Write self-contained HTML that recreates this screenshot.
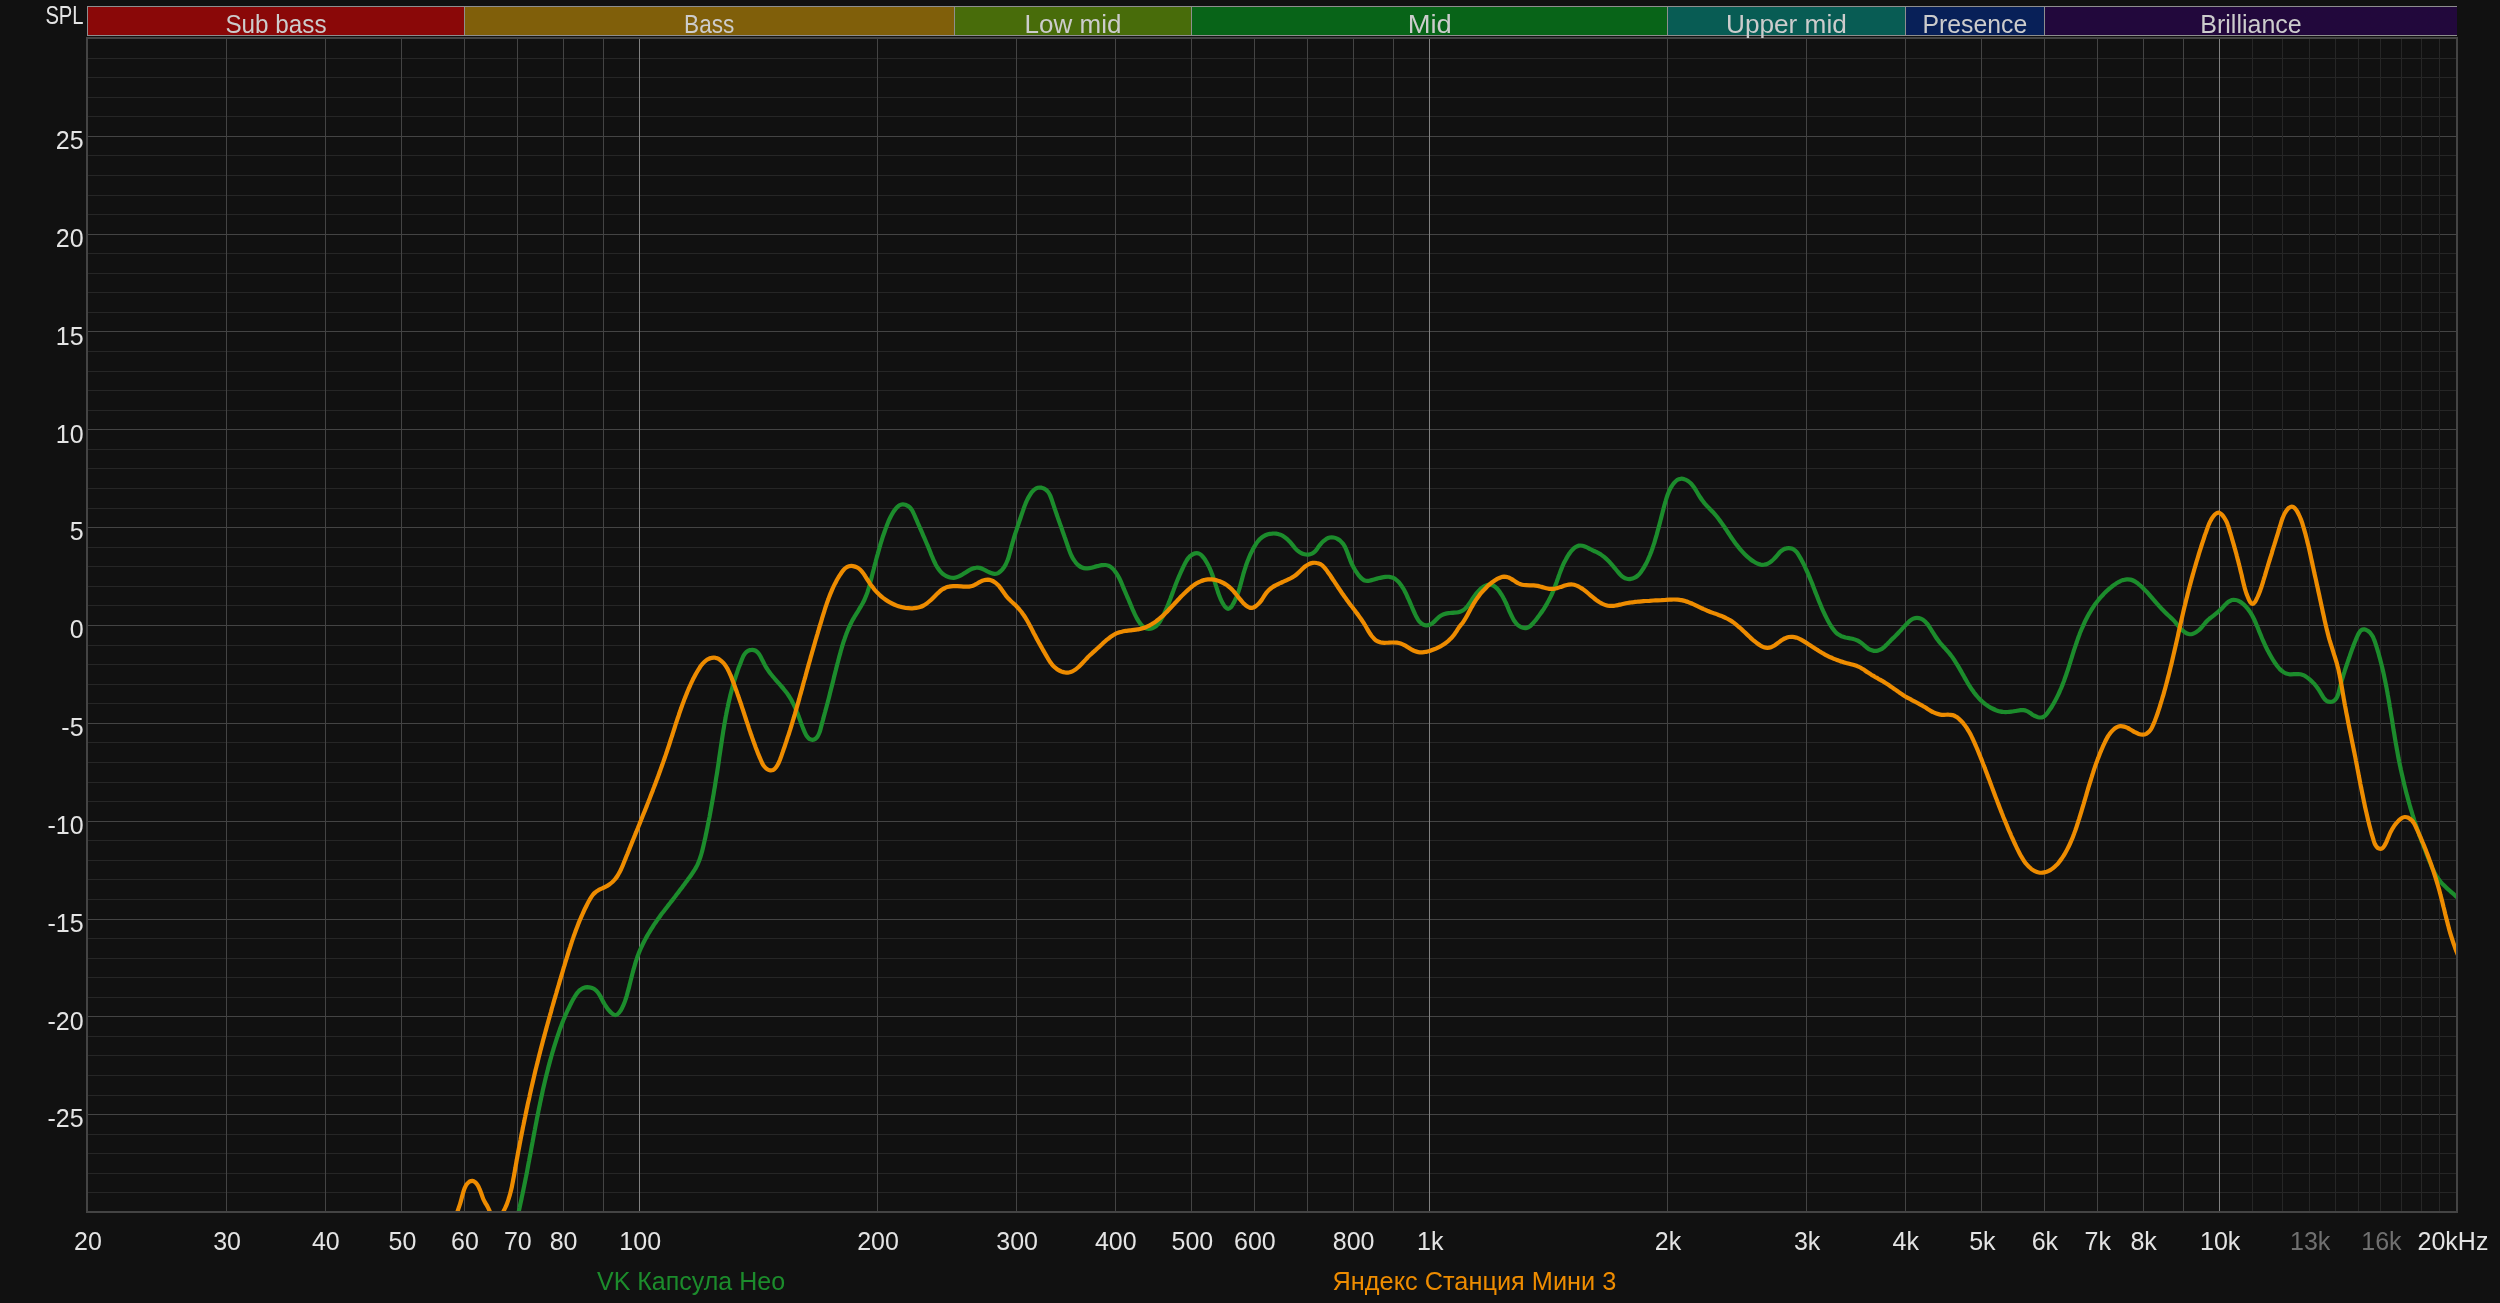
<!DOCTYPE html>
<html lang="ru"><head><meta charset="utf-8"><title>SPL</title>
<style>
html,body{margin:0;padding:0;background:#111111;width:2500px;height:1303px;overflow:hidden}
svg{position:absolute;left:0;top:0;display:block;will-change:transform}
text{font-family:"Liberation Sans",sans-serif;font-size:25px}
.g rect{shape-rendering:crispEdges}
</style></head><body>
<svg width="2500" height="1303" viewBox="0 0 2500 1303">
<rect width="2500" height="1303" fill="#111111"/>
<g class="g">
<rect x="87" y="6" width="2370" height="30" fill="#8e8e8e"/>
<rect x="88" y="7" width="376" height="28" fill="#8a0808"/>
<rect x="465" y="7" width="489" height="28" fill="#805f0a"/>
<rect x="955" y="7" width="236" height="28" fill="#486c0a"/>
<rect x="1192" y="7" width="475" height="28" fill="#086418"/>
<rect x="1668" y="7" width="237" height="28" fill="#085c54"/>
<rect x="1906" y="7" width="138" height="28" fill="#082058"/>
<rect x="2045" y="7" width="412" height="28" fill="#22083c"/>
<rect x="88" y="1192" width="2368" height="1" fill="#262626"/>
<rect x="88" y="1173" width="2368" height="1" fill="#262626"/>
<rect x="88" y="1153" width="2368" height="1" fill="#262626"/>
<rect x="88" y="1134" width="2368" height="1" fill="#262626"/>
<rect x="88" y="1114" width="2368" height="1" fill="#444444"/>
<rect x="88" y="1095" width="2368" height="1" fill="#262626"/>
<rect x="88" y="1075" width="2368" height="1" fill="#262626"/>
<rect x="88" y="1055" width="2368" height="1" fill="#262626"/>
<rect x="88" y="1036" width="2368" height="1" fill="#262626"/>
<rect x="88" y="1016" width="2368" height="1" fill="#444444"/>
<rect x="88" y="997" width="2368" height="1" fill="#262626"/>
<rect x="88" y="977" width="2368" height="1" fill="#262626"/>
<rect x="88" y="958" width="2368" height="1" fill="#262626"/>
<rect x="88" y="938" width="2368" height="1" fill="#262626"/>
<rect x="88" y="919" width="2368" height="1" fill="#444444"/>
<rect x="88" y="899" width="2368" height="1" fill="#262626"/>
<rect x="88" y="879" width="2368" height="1" fill="#262626"/>
<rect x="88" y="860" width="2368" height="1" fill="#262626"/>
<rect x="88" y="840" width="2368" height="1" fill="#262626"/>
<rect x="88" y="821" width="2368" height="1" fill="#444444"/>
<rect x="88" y="801" width="2368" height="1" fill="#262626"/>
<rect x="88" y="782" width="2368" height="1" fill="#262626"/>
<rect x="88" y="762" width="2368" height="1" fill="#262626"/>
<rect x="88" y="742" width="2368" height="1" fill="#262626"/>
<rect x="88" y="723" width="2368" height="1" fill="#444444"/>
<rect x="88" y="703" width="2368" height="1" fill="#262626"/>
<rect x="88" y="684" width="2368" height="1" fill="#262626"/>
<rect x="88" y="664" width="2368" height="1" fill="#262626"/>
<rect x="88" y="645" width="2368" height="1" fill="#262626"/>
<rect x="88" y="625" width="2368" height="1" fill="#444444"/>
<rect x="88" y="605" width="2368" height="1" fill="#262626"/>
<rect x="88" y="586" width="2368" height="1" fill="#262626"/>
<rect x="88" y="566" width="2368" height="1" fill="#262626"/>
<rect x="88" y="547" width="2368" height="1" fill="#262626"/>
<rect x="88" y="527" width="2368" height="1" fill="#444444"/>
<rect x="88" y="508" width="2368" height="1" fill="#262626"/>
<rect x="88" y="488" width="2368" height="1" fill="#262626"/>
<rect x="88" y="468" width="2368" height="1" fill="#262626"/>
<rect x="88" y="449" width="2368" height="1" fill="#262626"/>
<rect x="88" y="429" width="2368" height="1" fill="#444444"/>
<rect x="88" y="410" width="2368" height="1" fill="#262626"/>
<rect x="88" y="390" width="2368" height="1" fill="#262626"/>
<rect x="88" y="371" width="2368" height="1" fill="#262626"/>
<rect x="88" y="351" width="2368" height="1" fill="#262626"/>
<rect x="88" y="331" width="2368" height="1" fill="#444444"/>
<rect x="88" y="312" width="2368" height="1" fill="#262626"/>
<rect x="88" y="292" width="2368" height="1" fill="#262626"/>
<rect x="88" y="273" width="2368" height="1" fill="#262626"/>
<rect x="88" y="253" width="2368" height="1" fill="#262626"/>
<rect x="88" y="234" width="2368" height="1" fill="#444444"/>
<rect x="88" y="214" width="2368" height="1" fill="#262626"/>
<rect x="88" y="195" width="2368" height="1" fill="#262626"/>
<rect x="88" y="175" width="2368" height="1" fill="#262626"/>
<rect x="88" y="155" width="2368" height="1" fill="#262626"/>
<rect x="88" y="136" width="2368" height="1" fill="#444444"/>
<rect x="88" y="116" width="2368" height="1" fill="#262626"/>
<rect x="88" y="97" width="2368" height="1" fill="#262626"/>
<rect x="88" y="77" width="2368" height="1" fill="#262626"/>
<rect x="88" y="58" width="2368" height="1" fill="#262626"/>
<rect x="2252" y="39" width="1" height="1172" fill="#262626"/>
<rect x="2282" y="39" width="1" height="1172" fill="#262626"/>
<rect x="2309" y="39" width="1" height="1172" fill="#262626"/>
<rect x="2335" y="39" width="1" height="1172" fill="#262626"/>
<rect x="2358" y="39" width="1" height="1172" fill="#262626"/>
<rect x="2380" y="39" width="1" height="1172" fill="#262626"/>
<rect x="2401" y="39" width="1" height="1172" fill="#262626"/>
<rect x="2421" y="39" width="1" height="1172" fill="#262626"/>
<rect x="2439" y="39" width="1" height="1172" fill="#262626"/>
<rect x="226" y="39" width="1" height="1172" fill="#444444"/>
<rect x="325" y="39" width="1" height="1172" fill="#444444"/>
<rect x="401" y="39" width="1" height="1172" fill="#444444"/>
<rect x="464" y="39" width="1" height="1172" fill="#444444"/>
<rect x="517" y="39" width="1" height="1172" fill="#444444"/>
<rect x="563" y="39" width="1" height="1172" fill="#444444"/>
<rect x="603" y="39" width="1" height="1172" fill="#444444"/>
<rect x="877" y="39" width="1" height="1172" fill="#444444"/>
<rect x="1016" y="39" width="1" height="1172" fill="#444444"/>
<rect x="1115" y="39" width="1" height="1172" fill="#444444"/>
<rect x="1191" y="39" width="1" height="1172" fill="#444444"/>
<rect x="1254" y="39" width="1" height="1172" fill="#444444"/>
<rect x="1307" y="39" width="1" height="1172" fill="#444444"/>
<rect x="1353" y="39" width="1" height="1172" fill="#444444"/>
<rect x="1393" y="39" width="1" height="1172" fill="#444444"/>
<rect x="1667" y="39" width="1" height="1172" fill="#444444"/>
<rect x="1806" y="39" width="1" height="1172" fill="#444444"/>
<rect x="1905" y="39" width="1" height="1172" fill="#444444"/>
<rect x="1981" y="39" width="1" height="1172" fill="#444444"/>
<rect x="2044" y="39" width="1" height="1172" fill="#444444"/>
<rect x="2097" y="39" width="1" height="1172" fill="#444444"/>
<rect x="2143" y="39" width="1" height="1172" fill="#444444"/>
<rect x="2183" y="39" width="1" height="1172" fill="#444444"/>
<rect x="639" y="39" width="1" height="1172" fill="#808080"/>
<rect x="1429" y="39" width="1" height="1172" fill="#808080"/>
<rect x="2219" y="39" width="1" height="1172" fill="#808080"/>
<rect x="86" y="37" width="2372" height="2" fill="#444444"/>
<rect x="86" y="1211" width="2372" height="2" fill="#444444"/>
<rect x="86" y="37" width="2" height="1176" fill="#444444"/>
<rect x="2456" y="37" width="2" height="1176" fill="#444444"/>
</g>
<clipPath id="cp"><rect x="88" y="39" width="2368" height="1172"/></clipPath>
<g clip-path="url(#cp)" fill="none" stroke-width="4.2" stroke-linejoin="round" stroke-linecap="round">
<path stroke="#1c8c2c" d="M516.7 1219.7C516.9 1219.1 517.3 1217.1 517.6 1215.8C518.0 1214.6 518.3 1213.3 518.6 1212.0C518.9 1210.7 519.2 1209.4 519.5 1208.1C519.7 1206.8 520.0 1205.5 520.3 1204.2C520.6 1202.9 520.9 1201.6 521.2 1200.3C521.5 1199.0 521.7 1197.7 522.0 1196.4C522.3 1195.1 522.6 1193.8 522.8 1192.5C523.1 1191.2 523.4 1189.9 523.6 1188.6C523.9 1187.3 524.2 1186.0 524.4 1184.7C524.7 1183.4 525.0 1182.1 525.2 1180.8C525.5 1179.5 525.7 1178.2 526.0 1176.9C526.2 1175.6 526.5 1174.3 526.8 1173.0C527.0 1171.6 527.3 1170.3 527.5 1169.0C527.8 1167.7 528.0 1166.4 528.2 1165.1C528.5 1163.8 528.7 1162.5 529.0 1161.1C529.2 1159.8 529.5 1158.5 529.7 1157.2C530.0 1155.9 530.2 1154.6 530.5 1153.3C530.7 1151.9 531.0 1150.6 531.2 1149.3C531.4 1148.0 531.7 1146.7 531.9 1145.4C532.2 1144.1 532.4 1142.7 532.7 1141.4C532.9 1140.1 533.2 1138.8 533.4 1137.5C533.6 1136.2 533.9 1134.9 534.1 1133.5C534.4 1132.2 534.6 1130.9 534.9 1129.6C535.1 1128.3 535.4 1127.0 535.6 1125.7C535.9 1124.3 536.1 1123.0 536.4 1121.7C536.6 1120.4 536.9 1119.1 537.1 1117.8C537.4 1116.5 537.7 1115.2 537.9 1113.9C538.2 1112.5 538.4 1111.2 538.7 1109.9C539.0 1108.6 539.2 1107.3 539.5 1106.0C539.8 1104.7 540.0 1103.4 540.3 1102.1C540.6 1100.8 540.9 1099.5 541.1 1098.2C541.4 1096.9 541.7 1095.6 542.0 1094.2C542.3 1092.9 542.6 1091.6 542.8 1090.3C543.1 1089.0 543.4 1087.7 543.7 1086.5C544.0 1085.2 544.3 1083.9 544.6 1082.6C544.9 1081.3 545.2 1080.0 545.5 1078.7C545.8 1077.4 546.2 1076.1 546.5 1074.8C546.8 1073.5 547.1 1072.2 547.5 1070.9C547.8 1069.6 548.1 1068.4 548.4 1067.1C548.8 1065.8 549.1 1064.5 549.5 1063.2C549.8 1061.9 550.1 1060.7 550.5 1059.4C550.9 1058.1 551.2 1056.8 551.6 1055.5C551.9 1054.3 552.3 1053.0 552.7 1051.7C553.1 1050.5 553.4 1049.2 553.8 1047.9C554.2 1046.7 554.6 1045.4 555.0 1044.1C555.4 1042.9 555.8 1041.6 556.2 1040.3C556.6 1039.1 557.0 1037.8 557.4 1036.6C557.8 1035.3 558.3 1034.1 558.7 1032.8C559.1 1031.5 559.6 1030.3 560.0 1029.0C560.5 1027.8 560.9 1026.6 561.4 1025.3C561.9 1024.1 562.3 1022.8 562.8 1021.6C563.3 1020.3 563.8 1019.1 564.4 1017.9C564.9 1016.6 565.4 1015.4 565.9 1014.1C566.5 1012.9 567.0 1011.7 567.6 1010.4C568.2 1009.2 568.8 1007.9 569.4 1006.7C570.0 1005.5 570.6 1004.2 571.2 1003.0C571.9 1001.8 572.5 1000.5 573.2 999.3C573.9 998.1 574.6 996.8 575.4 995.7C576.1 994.5 576.9 993.4 577.7 992.4C578.6 991.4 579.4 990.5 580.4 989.8C581.4 989.0 582.4 988.4 583.5 987.9C584.7 987.5 585.9 987.3 587.2 987.2C588.5 987.2 590.0 987.4 591.3 987.8C592.6 988.2 593.9 988.9 595.0 989.6C596.1 990.4 597.0 991.4 597.9 992.5C598.7 993.5 599.4 994.7 600.1 995.9C600.8 997.1 601.4 998.3 602.0 999.5C602.6 1000.7 603.2 1001.9 603.9 1003.0C604.6 1004.2 605.3 1005.3 606.0 1006.4C606.8 1007.6 607.6 1008.7 608.5 1009.8C609.4 1010.9 610.4 1012.2 611.5 1013.0C612.5 1013.9 613.7 1014.8 614.7 1015.0C615.7 1015.2 616.8 1014.8 617.7 1014.1C618.7 1013.4 619.6 1012.1 620.4 1010.9C621.2 1009.8 621.9 1008.4 622.5 1007.1C623.2 1005.8 623.7 1004.6 624.2 1003.3C624.7 1002.1 625.1 1000.8 625.5 999.6C626.0 998.3 626.3 997.1 626.7 995.8C627.0 994.6 627.4 993.3 627.7 992.0C628.1 990.7 628.4 989.5 628.8 988.2C629.1 986.9 629.4 985.6 629.7 984.3C630.1 983.0 630.4 981.7 630.7 980.4C631.0 979.1 631.4 977.8 631.7 976.5C632.0 975.2 632.4 973.9 632.7 972.6C633.1 971.3 633.4 970.0 633.8 968.7C634.1 967.4 634.5 966.1 634.9 964.8C635.3 963.5 635.6 962.3 636.0 961.0C636.5 959.7 636.9 958.4 637.3 957.2C637.8 955.9 638.2 954.7 638.7 953.4C639.2 952.2 639.7 951.0 640.2 949.7C640.7 948.5 641.3 947.3 641.9 946.1C642.4 944.9 643.0 943.7 643.6 942.5C644.2 941.3 644.8 940.1 645.4 939.0C646.0 937.8 646.7 936.6 647.4 935.5C648.0 934.3 648.7 933.2 649.4 932.1C650.1 930.9 650.8 929.8 651.5 928.7C652.2 927.5 652.9 926.4 653.6 925.3C654.4 924.2 655.1 923.1 655.9 922.0C656.6 920.9 657.4 919.8 658.2 918.7C659.0 917.6 659.8 916.6 660.5 915.5C661.3 914.4 662.1 913.3 662.9 912.3C663.7 911.2 664.6 910.2 665.4 909.1C666.2 908.0 667.0 907.0 667.8 905.9C668.6 904.9 669.5 903.8 670.3 902.8C671.1 901.7 671.9 900.7 672.8 899.6C673.6 898.6 674.4 897.5 675.2 896.5C676.0 895.4 676.8 894.3 677.6 893.3C678.4 892.2 679.2 891.2 680.0 890.1C680.8 889.0 681.6 888.0 682.4 886.9C683.2 885.8 684.0 884.8 684.8 883.7C685.6 882.6 686.4 881.6 687.2 880.5C688.0 879.4 688.8 878.3 689.6 877.2C690.4 876.2 691.1 875.1 691.9 874.0C692.7 872.9 693.4 871.8 694.1 870.7C694.8 869.5 695.5 868.4 696.1 867.2C696.8 866.1 697.4 864.9 697.9 863.7C698.4 862.5 698.9 861.3 699.4 860.0C699.9 858.8 700.3 857.5 700.7 856.2C701.1 855.0 701.5 853.7 701.8 852.4C702.2 851.1 702.5 849.8 702.8 848.5C703.1 847.2 703.4 845.9 703.7 844.6C704.0 843.3 704.3 842.0 704.6 840.6C704.9 839.3 705.2 838.0 705.5 836.7C705.7 835.4 706.0 834.1 706.3 832.8C706.6 831.5 706.8 830.2 707.1 828.9C707.4 827.6 707.6 826.2 707.9 824.9C708.2 823.6 708.4 822.3 708.7 821.0C708.9 819.7 709.2 818.4 709.5 817.1C709.7 815.8 709.9 814.5 710.2 813.2C710.4 811.9 710.7 810.6 710.9 809.2C711.2 807.9 711.4 806.6 711.6 805.3C711.9 804.0 712.1 802.7 712.3 801.4C712.6 800.1 712.8 798.8 713.0 797.5C713.2 796.2 713.5 794.9 713.7 793.5C713.9 792.2 714.1 790.9 714.3 789.6C714.6 788.3 714.8 787.0 715.0 785.7C715.2 784.4 715.4 783.1 715.6 781.8C715.8 780.4 716.0 779.1 716.2 777.8C716.4 776.5 716.7 775.2 716.9 773.9C717.1 772.6 717.3 771.2 717.5 769.9C717.7 768.6 717.9 767.3 718.1 766.0C718.3 764.6 718.5 763.3 718.7 762.0C718.9 760.7 719.1 759.4 719.2 758.0C719.4 756.7 719.6 755.4 719.8 754.1C720.0 752.7 720.2 751.4 720.4 750.1C720.6 748.8 720.8 747.4 721.0 746.1C721.2 744.8 721.4 743.4 721.6 742.1C721.8 740.8 722.0 739.5 722.2 738.1C722.4 736.8 722.6 735.5 722.8 734.2C723.0 732.8 723.2 731.5 723.4 730.2C723.7 728.9 723.9 727.6 724.1 726.2C724.3 724.9 724.5 723.6 724.8 722.3C725.0 721.0 725.2 719.7 725.5 718.3C725.7 717.0 725.9 715.7 726.2 714.4C726.4 713.1 726.7 711.8 727.0 710.5C727.2 709.2 727.5 707.9 727.8 706.6C728.0 705.3 728.3 704.0 728.6 702.7C728.9 701.4 729.2 700.1 729.5 698.9C729.8 697.6 730.1 696.3 730.4 695.0C730.7 693.7 731.1 692.5 731.4 691.2C731.7 689.9 732.1 688.6 732.4 687.4C732.8 686.1 733.2 684.8 733.5 683.5C733.9 682.3 734.3 681.0 734.7 679.7C735.1 678.4 735.5 677.2 735.9 675.9C736.3 674.6 736.8 673.4 737.2 672.1C737.6 670.8 738.1 669.5 738.5 668.2C739.0 666.9 739.5 665.7 740.0 664.4C740.5 663.1 741.0 661.8 741.5 660.5C742.0 659.2 742.5 657.8 743.1 656.6C743.7 655.5 744.4 654.3 745.2 653.3C746.0 652.3 746.9 651.5 748.0 650.9C749.1 650.3 750.4 649.9 751.6 649.9C752.8 649.8 754.1 650.0 755.2 650.5C756.2 651.0 757.2 651.8 758.1 652.8C759.0 653.8 759.7 655.1 760.4 656.3C761.1 657.6 761.8 659.0 762.4 660.3C763.1 661.6 763.7 662.8 764.3 664.0C765.0 665.2 765.6 666.4 766.3 667.5C767.0 668.6 767.7 669.6 768.4 670.7C769.1 671.7 769.8 672.7 770.6 673.8C771.4 674.8 772.2 675.8 773.1 676.8C773.9 677.8 774.8 678.8 775.7 679.8C776.6 680.9 777.5 681.9 778.4 682.9C779.3 683.9 780.2 684.9 781.1 686.0C782.0 687.0 782.9 688.0 783.7 689.1C784.6 690.1 785.5 691.2 786.3 692.3C787.1 693.3 787.8 694.4 788.6 695.5C789.3 696.6 790.0 697.7 790.7 698.8C791.3 699.9 791.9 701.0 792.5 702.2C793.1 703.3 793.7 704.5 794.2 705.7C794.8 706.8 795.3 708.0 795.8 709.2C796.3 710.4 796.8 711.6 797.3 712.9C797.8 714.1 798.3 715.4 798.7 716.6C799.2 717.9 799.7 719.2 800.2 720.5C800.6 721.8 801.1 723.1 801.6 724.4C802.1 725.8 802.6 727.1 803.2 728.5C803.7 729.9 804.3 731.3 804.9 732.6C805.5 733.9 806.1 735.2 806.9 736.3C807.6 737.3 808.4 738.3 809.3 738.9C810.2 739.4 811.4 739.8 812.4 739.8C813.4 739.7 814.6 739.4 815.5 738.8C816.4 738.2 817.1 737.2 817.8 736.1C818.5 735.1 819.0 733.8 819.5 732.4C820.0 731.1 820.4 729.6 820.8 728.2C821.1 726.7 821.5 725.3 821.9 723.9C822.2 722.5 822.6 721.1 823.0 719.8C823.3 718.5 823.7 717.1 824.0 715.9C824.4 714.6 824.7 713.3 825.1 712.0C825.4 710.8 825.8 709.5 826.1 708.3C826.4 707.1 826.8 705.8 827.1 704.6C827.4 703.3 827.8 702.1 828.1 700.8C828.4 699.6 828.8 698.3 829.1 697.0C829.4 695.8 829.7 694.5 830.0 693.2C830.4 691.9 830.7 690.6 831.0 689.3C831.3 688.0 831.7 686.8 832.0 685.5C832.3 684.2 832.6 682.9 833.0 681.6C833.3 680.3 833.6 679.0 833.9 677.6C834.2 676.3 834.6 675.0 834.9 673.7C835.2 672.4 835.5 671.1 835.9 669.8C836.2 668.5 836.5 667.2 836.9 665.9C837.2 664.6 837.5 663.3 837.9 662.0C838.2 660.7 838.6 659.4 838.9 658.1C839.2 656.8 839.6 655.5 840.0 654.2C840.3 652.9 840.7 651.6 841.0 650.3C841.4 649.1 841.8 647.8 842.1 646.5C842.5 645.2 842.9 644.0 843.3 642.7C843.7 641.4 844.1 640.2 844.6 638.9C845.0 637.7 845.4 636.4 845.9 635.2C846.3 633.9 846.8 632.7 847.3 631.5C847.8 630.2 848.3 629.0 848.9 627.8C849.4 626.6 849.9 625.4 850.5 624.2C851.1 623.0 851.7 621.8 852.3 620.6C852.9 619.5 853.6 618.3 854.3 617.1C854.9 616.0 855.6 614.8 856.4 613.7C857.1 612.5 857.8 611.4 858.5 610.3C859.2 609.1 860.0 608.0 860.6 606.8C861.3 605.7 862.0 604.5 862.7 603.3C863.3 602.2 863.9 601.0 864.5 599.8C865.0 598.6 865.5 597.4 866.0 596.1C866.5 594.9 866.9 593.7 867.4 592.4C867.8 591.2 868.2 589.9 868.6 588.6C869.0 587.4 869.3 586.1 869.7 584.8C870.0 583.5 870.4 582.2 870.7 580.9C871.0 579.7 871.3 578.4 871.7 577.1C872.0 575.8 872.3 574.5 872.7 573.2C873.0 571.9 873.3 570.6 873.7 569.3C874.0 568.0 874.3 566.7 874.7 565.4C875.0 564.1 875.3 562.8 875.7 561.5C876.0 560.2 876.4 558.9 876.7 557.6C877.1 556.3 877.4 555.0 877.8 553.8C878.1 552.5 878.5 551.2 878.9 549.9C879.2 548.6 879.6 547.3 880.0 546.0C880.3 544.8 880.7 543.5 881.1 542.2C881.5 540.9 881.9 539.7 882.3 538.4C882.7 537.1 883.1 535.9 883.6 534.6C884.0 533.4 884.4 532.1 884.9 530.9C885.3 529.6 885.7 528.4 886.2 527.2C886.7 525.9 887.1 524.7 887.6 523.5C888.1 522.3 888.6 521.0 889.2 519.8C889.7 518.6 890.3 517.4 890.9 516.2C891.6 515.0 892.2 513.8 893.0 512.6C893.7 511.5 894.5 510.2 895.4 509.1C896.2 508.1 897.2 506.9 898.2 506.2C899.2 505.4 900.4 504.8 901.6 504.5C902.8 504.3 904.2 504.4 905.4 504.7C906.6 505.1 907.8 505.7 908.8 506.5C909.8 507.2 910.6 508.3 911.4 509.3C912.2 510.4 912.8 511.6 913.4 512.9C914.0 514.1 914.6 515.5 915.1 516.7C915.7 518.0 916.2 519.3 916.8 520.5C917.3 521.8 917.8 523.0 918.4 524.3C918.9 525.5 919.4 526.7 920.0 527.9C920.5 529.1 921.0 530.3 921.6 531.5C922.1 532.8 922.6 533.9 923.1 535.1C923.6 536.3 924.2 537.5 924.7 538.7C925.2 539.9 925.7 541.1 926.2 542.3C926.7 543.5 927.3 544.7 927.8 545.9C928.3 547.2 928.8 548.4 929.3 549.6C929.8 550.9 930.3 552.1 930.8 553.4C931.3 554.7 931.8 555.9 932.4 557.2C932.9 558.5 933.4 559.8 934.0 561.0C934.6 562.3 935.2 563.5 935.8 564.7C936.5 565.9 937.1 567.1 937.9 568.2C938.6 569.3 939.4 570.3 940.3 571.3C941.1 572.2 942.0 573.2 943.0 574.0C944.1 574.8 945.1 575.5 946.3 576.1C947.5 576.7 948.8 577.3 950.0 577.5C951.3 577.8 952.6 578.0 953.9 577.9C955.1 577.8 956.4 577.4 957.6 576.9C958.9 576.4 960.1 575.8 961.3 575.1C962.5 574.4 963.7 573.6 964.9 572.9C966.1 572.1 967.3 571.3 968.5 570.6C969.7 569.9 970.9 569.3 972.1 568.8C973.3 568.3 974.5 567.9 975.8 567.8C977.0 567.6 978.3 567.7 979.6 567.9C980.8 568.2 982.1 568.7 983.4 569.3C984.7 569.9 986.0 570.6 987.3 571.3C988.5 571.9 989.8 572.6 991.0 573.0C992.3 573.5 993.5 573.9 994.7 573.9C995.9 573.9 997.0 573.6 998.1 573.1C999.2 572.5 1000.2 571.7 1001.1 570.8C1002.1 569.9 1003.0 568.8 1003.7 567.7C1004.5 566.6 1005.2 565.4 1005.8 564.2C1006.4 563.1 1006.9 561.8 1007.4 560.6C1007.9 559.3 1008.3 558.1 1008.7 556.8C1009.1 555.5 1009.5 554.2 1009.8 552.9C1010.2 551.6 1010.5 550.3 1010.8 549.0C1011.2 547.7 1011.5 546.3 1011.9 545.0C1012.3 543.7 1012.6 542.4 1013.0 541.2C1013.4 539.9 1013.8 538.6 1014.1 537.3C1014.5 536.0 1014.9 534.8 1015.3 533.5C1015.7 532.2 1016.1 530.9 1016.6 529.7C1017.0 528.4 1017.4 527.1 1017.8 525.9C1018.2 524.6 1018.7 523.4 1019.1 522.1C1019.5 520.9 1019.9 519.6 1020.4 518.4C1020.8 517.1 1021.2 515.8 1021.6 514.6C1022.1 513.4 1022.5 512.1 1022.9 510.9C1023.3 509.6 1023.8 508.4 1024.2 507.1C1024.7 505.9 1025.1 504.7 1025.6 503.4C1026.1 502.2 1026.7 501.0 1027.2 499.8C1027.8 498.5 1028.5 497.3 1029.2 496.1C1029.9 495.0 1030.7 493.7 1031.5 492.6C1032.4 491.6 1033.3 490.4 1034.3 489.6C1035.4 488.8 1036.5 488.1 1037.7 487.8C1038.9 487.5 1040.3 487.5 1041.6 487.7C1042.8 488.0 1044.2 488.5 1045.2 489.2C1046.3 489.9 1047.2 490.8 1048.0 491.8C1048.7 492.7 1049.4 493.9 1050.0 495.1C1050.5 496.3 1051.0 497.6 1051.5 498.9C1051.9 500.2 1052.4 501.5 1052.8 502.9C1053.2 504.2 1053.7 505.5 1054.1 506.8C1054.5 508.1 1055.0 509.3 1055.4 510.6C1055.8 511.9 1056.3 513.2 1056.7 514.5C1057.1 515.7 1057.6 517.0 1058.0 518.2C1058.5 519.5 1058.9 520.7 1059.3 522.0C1059.8 523.2 1060.2 524.5 1060.7 525.7C1061.1 527.0 1061.5 528.2 1062.0 529.4C1062.4 530.7 1062.8 531.9 1063.3 533.2C1063.7 534.4 1064.2 535.6 1064.6 536.9C1065.0 538.1 1065.5 539.4 1065.9 540.6C1066.3 541.9 1066.8 543.1 1067.2 544.4C1067.6 545.7 1068.1 547.0 1068.5 548.2C1069.0 549.5 1069.4 550.8 1069.9 552.0C1070.4 553.3 1070.9 554.5 1071.5 555.7C1072.1 556.9 1072.7 558.1 1073.4 559.3C1074.2 560.4 1074.9 561.5 1075.8 562.6C1076.7 563.6 1077.7 564.7 1078.7 565.5C1079.7 566.3 1080.9 567.1 1082.0 567.5C1083.2 568.0 1084.4 568.3 1085.7 568.4C1086.9 568.5 1088.2 568.3 1089.5 568.1C1090.8 567.9 1092.2 567.6 1093.5 567.2C1094.9 566.9 1096.3 566.5 1097.6 566.1C1099.0 565.8 1100.3 565.4 1101.7 565.2C1103.0 565.1 1104.3 564.9 1105.5 565.0C1106.8 565.2 1108.0 565.5 1109.2 566.0C1110.3 566.6 1111.3 567.4 1112.3 568.3C1113.3 569.2 1114.3 570.3 1115.1 571.4C1115.9 572.5 1116.7 573.6 1117.4 574.8C1118.1 575.9 1118.7 577.1 1119.3 578.3C1119.9 579.5 1120.5 580.7 1121.0 581.9C1121.5 583.1 1122.0 584.3 1122.5 585.5C1123.0 586.7 1123.5 588.0 1124.0 589.2C1124.6 590.4 1125.1 591.7 1125.6 592.9C1126.1 594.1 1126.7 595.4 1127.2 596.6C1127.7 597.8 1128.3 599.1 1128.8 600.3C1129.3 601.5 1129.8 602.8 1130.4 604.0C1130.9 605.2 1131.4 606.5 1131.9 607.7C1132.4 608.9 1132.9 610.1 1133.5 611.3C1134.0 612.5 1134.5 613.7 1135.1 614.9C1135.7 616.1 1136.3 617.3 1136.9 618.4C1137.6 619.6 1138.3 620.8 1139.1 621.9C1139.8 623.1 1140.7 624.3 1141.6 625.2C1142.5 626.2 1143.5 627.1 1144.7 627.8C1145.8 628.4 1147.1 628.7 1148.4 628.8C1149.6 628.9 1151.1 628.7 1152.3 628.3C1153.6 627.9 1154.7 627.2 1155.8 626.4C1156.8 625.6 1157.6 624.6 1158.5 623.5C1159.3 622.5 1160.0 621.3 1160.7 620.1C1161.4 619.0 1162.0 617.8 1162.7 616.6C1163.3 615.4 1163.9 614.2 1164.5 612.9C1165.0 611.7 1165.6 610.5 1166.1 609.3C1166.7 608.1 1167.2 606.8 1167.7 605.6C1168.2 604.4 1168.7 603.1 1169.2 601.9C1169.7 600.6 1170.1 599.4 1170.6 598.2C1171.1 596.9 1171.5 595.7 1172.0 594.4C1172.5 593.2 1172.9 591.9 1173.4 590.7C1173.8 589.4 1174.3 588.2 1174.8 587.0C1175.2 585.7 1175.7 584.5 1176.2 583.2C1176.7 582.0 1177.2 580.8 1177.7 579.5C1178.2 578.3 1178.7 577.1 1179.2 575.9C1179.8 574.6 1180.3 573.4 1180.8 572.2C1181.4 571.0 1182.0 569.8 1182.5 568.6C1183.1 567.3 1183.7 566.1 1184.3 564.9C1184.9 563.7 1185.5 562.5 1186.2 561.3C1186.8 560.2 1187.5 559.0 1188.4 558.0C1189.2 557.0 1190.2 556.0 1191.3 555.3C1192.4 554.5 1193.8 553.7 1195.0 553.4C1196.3 553.1 1197.7 553.1 1198.8 553.5C1199.9 553.8 1200.9 554.7 1201.8 555.6C1202.8 556.5 1203.6 557.7 1204.4 558.8C1205.2 559.9 1205.9 561.1 1206.6 562.2C1207.3 563.4 1207.9 564.6 1208.5 565.8C1209.1 566.9 1209.7 568.2 1210.2 569.4C1210.8 570.6 1211.2 571.8 1211.7 573.1C1212.2 574.3 1212.6 575.6 1213.1 576.8C1213.5 578.1 1213.9 579.4 1214.3 580.6C1214.8 581.9 1215.1 583.2 1215.5 584.5C1216.0 585.7 1216.4 587.0 1216.8 588.3C1217.2 589.5 1217.6 590.8 1218.0 592.0C1218.4 593.3 1218.9 594.6 1219.3 595.8C1219.8 597.0 1220.3 598.2 1220.8 599.5C1221.4 600.7 1222.0 602.0 1222.7 603.2C1223.5 604.4 1224.3 606.0 1225.3 606.9C1226.2 607.8 1227.3 608.7 1228.2 608.8C1229.1 608.8 1230.1 608.1 1230.9 607.3C1231.7 606.5 1232.4 605.1 1233.1 604.0C1233.8 602.8 1234.4 601.5 1235.0 600.3C1235.6 599.1 1236.1 597.9 1236.7 596.6C1237.2 595.4 1237.6 594.1 1238.0 592.8C1238.5 591.6 1238.9 590.3 1239.3 589.0C1239.7 587.7 1240.0 586.4 1240.4 585.1C1240.8 583.9 1241.1 582.6 1241.4 581.3C1241.8 580.0 1242.1 578.7 1242.5 577.4C1242.8 576.1 1243.2 574.8 1243.5 573.5C1243.9 572.2 1244.3 571.0 1244.7 569.7C1245.1 568.4 1245.5 567.2 1245.9 565.9C1246.3 564.7 1246.8 563.4 1247.2 562.2C1247.7 560.9 1248.2 559.7 1248.7 558.4C1249.2 557.2 1249.7 556.0 1250.2 554.8C1250.8 553.6 1251.4 552.3 1252.0 551.1C1252.6 549.9 1253.2 548.7 1253.8 547.6C1254.5 546.4 1255.2 545.2 1255.9 544.1C1256.6 543.0 1257.4 541.9 1258.3 540.9C1259.1 539.9 1260.0 538.9 1261.0 538.1C1262.0 537.2 1263.1 536.5 1264.2 535.9C1265.4 535.2 1266.7 534.7 1268.0 534.3C1269.3 533.9 1270.7 533.7 1272.0 533.6C1273.3 533.4 1274.7 533.5 1276.0 533.6C1277.3 533.8 1278.6 534.1 1279.8 534.6C1281.0 535.0 1282.2 535.6 1283.3 536.2C1284.5 536.9 1285.5 537.7 1286.6 538.6C1287.6 539.5 1288.5 540.4 1289.5 541.4C1290.4 542.4 1291.3 543.5 1292.2 544.6C1293.0 545.7 1293.9 546.8 1294.8 547.8C1295.7 548.8 1296.6 549.8 1297.6 550.7C1298.6 551.5 1299.6 552.3 1300.8 552.9C1301.9 553.5 1303.2 554.0 1304.5 554.3C1305.7 554.6 1307.1 554.7 1308.3 554.6C1309.6 554.5 1310.8 554.2 1311.9 553.7C1313.0 553.2 1314.0 552.4 1314.9 551.5C1315.8 550.6 1316.6 549.5 1317.4 548.4C1318.2 547.2 1319.1 546.0 1320.0 544.8C1320.9 543.7 1321.9 542.5 1323.0 541.5C1324.0 540.5 1325.2 539.6 1326.3 538.9C1327.5 538.3 1328.7 537.8 1329.8 537.5C1331.0 537.3 1332.3 537.3 1333.5 537.5C1334.7 537.7 1335.9 538.1 1337.0 538.6C1338.1 539.2 1339.2 539.9 1340.2 540.7C1341.2 541.6 1342.1 542.6 1342.9 543.6C1343.7 544.7 1344.4 545.9 1345.1 547.1C1345.7 548.3 1346.3 549.6 1346.8 550.9C1347.3 552.2 1347.8 553.6 1348.3 554.9C1348.7 556.2 1349.2 557.5 1349.7 558.7C1350.1 560.0 1350.6 561.2 1351.1 562.4C1351.6 563.6 1352.2 564.7 1352.8 565.9C1353.3 567.0 1353.9 568.1 1354.6 569.2C1355.3 570.4 1356.0 571.5 1356.8 572.6C1357.6 573.8 1358.4 575.0 1359.3 576.1C1360.3 577.1 1361.2 578.3 1362.3 579.0C1363.3 579.8 1364.4 580.5 1365.6 580.8C1366.7 581.0 1367.9 580.9 1369.2 580.8C1370.4 580.6 1371.7 580.2 1373.0 579.8C1374.4 579.5 1375.7 579.0 1377.1 578.6C1378.5 578.3 1379.9 577.9 1381.2 577.6C1382.6 577.3 1384.0 577.0 1385.3 576.9C1386.7 576.8 1388.0 576.7 1389.2 576.8C1390.5 577.0 1391.7 577.3 1392.8 577.7C1393.9 578.2 1395.0 578.8 1396.0 579.6C1397.0 580.3 1397.9 581.2 1398.8 582.2C1399.7 583.2 1400.5 584.3 1401.3 585.4C1402.1 586.5 1402.9 587.8 1403.6 589.0C1404.3 590.2 1404.9 591.5 1405.6 592.8C1406.2 594.0 1406.8 595.3 1407.3 596.5C1407.9 597.8 1408.4 599.0 1409.0 600.1C1409.5 601.3 1410.0 602.5 1410.5 603.6C1411.0 604.8 1411.4 605.9 1412.0 607.1C1412.5 608.2 1413.0 609.4 1413.5 610.6C1414.0 611.8 1414.6 613.1 1415.2 614.4C1415.8 615.6 1416.4 617.0 1417.2 618.2C1417.9 619.4 1418.6 620.7 1419.5 621.7C1420.4 622.7 1421.4 623.6 1422.5 624.2C1423.5 624.8 1424.8 625.2 1426.0 625.3C1427.2 625.4 1428.5 625.3 1429.7 624.8C1430.9 624.4 1432.0 623.5 1433.0 622.7C1434.1 621.8 1435.1 620.7 1436.1 619.7C1437.1 618.7 1438.1 617.6 1439.1 616.8C1440.1 616.0 1441.2 615.3 1442.3 614.8C1443.4 614.2 1444.6 613.9 1445.9 613.6C1447.1 613.3 1448.5 613.2 1449.9 613.0C1451.3 612.9 1452.8 612.9 1454.2 612.7C1455.7 612.6 1457.1 612.5 1458.4 612.2C1459.7 611.9 1460.9 611.4 1462.0 610.9C1463.1 610.3 1464.0 609.6 1465.0 608.8C1465.9 608.0 1466.7 607.0 1467.5 606.1C1468.3 605.1 1469.1 604.0 1469.8 602.9C1470.6 601.8 1471.3 600.7 1472.1 599.5C1472.9 598.4 1473.6 597.2 1474.5 596.0C1475.3 594.9 1476.2 593.7 1477.1 592.6C1478.1 591.5 1479.1 590.4 1480.1 589.4C1481.2 588.4 1482.3 587.5 1483.4 586.8C1484.5 586.1 1485.7 585.5 1486.8 585.1C1487.9 584.8 1489.1 584.6 1490.1 584.7C1491.2 584.8 1492.3 585.2 1493.3 585.7C1494.4 586.3 1495.4 587.1 1496.3 587.9C1497.3 588.8 1498.2 589.9 1499.1 591.0C1499.9 592.2 1500.8 593.4 1501.5 594.7C1502.3 595.9 1503.1 597.3 1503.7 598.5C1504.4 599.8 1505.0 601.1 1505.6 602.3C1506.2 603.5 1506.7 604.7 1507.2 605.9C1507.7 607.0 1508.1 608.1 1508.6 609.3C1509.1 610.4 1509.6 611.5 1510.1 612.7C1510.6 613.8 1511.2 615.0 1511.8 616.2C1512.4 617.4 1513.0 618.7 1513.7 619.9C1514.5 621.0 1515.3 622.3 1516.2 623.3C1517.1 624.4 1518.1 625.4 1519.2 626.1C1520.4 626.9 1521.7 627.5 1522.9 627.8C1524.2 628.1 1525.5 628.1 1526.7 627.9C1527.9 627.6 1529.0 627.0 1530.0 626.3C1531.0 625.5 1531.9 624.5 1532.8 623.5C1533.7 622.5 1534.6 621.4 1535.5 620.4C1536.3 619.3 1537.2 618.2 1538.0 617.1C1538.8 616.0 1539.6 614.9 1540.4 613.8C1541.2 612.7 1542.0 611.6 1542.7 610.5C1543.5 609.4 1544.2 608.2 1544.9 607.1C1545.6 606.0 1546.3 604.8 1547.0 603.6C1547.6 602.5 1548.3 601.3 1548.9 600.1C1549.5 599.0 1550.1 597.8 1550.7 596.6C1551.3 595.4 1551.8 594.2 1552.4 593.0C1552.9 591.8 1553.4 590.6 1553.9 589.4C1554.4 588.1 1554.9 586.9 1555.3 585.7C1555.8 584.4 1556.2 583.2 1556.7 581.9C1557.1 580.7 1557.5 579.4 1558.0 578.2C1558.4 577.0 1558.8 575.7 1559.3 574.5C1559.8 573.2 1560.2 572.0 1560.7 570.7C1561.2 569.5 1561.7 568.2 1562.2 567.0C1562.7 565.8 1563.3 564.5 1563.8 563.3C1564.4 562.1 1565.0 560.9 1565.7 559.7C1566.3 558.5 1567.0 557.3 1567.7 556.1C1568.5 554.9 1569.2 553.7 1570.1 552.6C1570.9 551.5 1571.8 550.4 1572.7 549.5C1573.6 548.5 1574.6 547.7 1575.7 547.0C1576.7 546.4 1577.8 545.9 1578.9 545.6C1580.1 545.4 1581.3 545.5 1582.5 545.7C1583.8 546.0 1585.1 546.6 1586.4 547.2C1587.7 547.8 1589.0 548.6 1590.3 549.2C1591.6 549.8 1592.8 550.4 1594.1 551.0C1595.3 551.6 1596.5 552.1 1597.6 552.7C1598.8 553.3 1599.9 553.9 1601.0 554.6C1602.0 555.3 1603.1 556.1 1604.1 556.9C1605.1 557.7 1606.0 558.6 1607.0 559.5C1607.9 560.4 1608.8 561.3 1609.8 562.3C1610.7 563.3 1611.6 564.3 1612.4 565.3C1613.3 566.4 1614.2 567.4 1615.1 568.5C1615.9 569.5 1616.8 570.6 1617.7 571.6C1618.6 572.7 1619.5 573.8 1620.4 574.7C1621.4 575.7 1622.3 576.6 1623.4 577.3C1624.4 578.0 1625.6 578.6 1626.8 578.8C1628.1 579.1 1629.5 579.1 1630.8 578.9C1632.2 578.8 1633.5 578.3 1634.7 577.7C1635.9 577.1 1636.9 576.3 1637.9 575.5C1638.9 574.6 1639.8 573.5 1640.6 572.5C1641.4 571.4 1642.2 570.2 1642.9 569.1C1643.6 568.0 1644.3 566.8 1645.0 565.6C1645.6 564.4 1646.3 563.3 1646.9 562.1C1647.5 560.9 1648.0 559.7 1648.5 558.5C1649.1 557.2 1649.6 556.0 1650.1 554.8C1650.6 553.5 1651.0 552.3 1651.5 551.1C1652.0 549.8 1652.4 548.6 1652.8 547.3C1653.2 546.0 1653.7 544.8 1654.1 543.5C1654.5 542.2 1654.9 541.0 1655.2 539.7C1655.6 538.4 1656.0 537.1 1656.4 535.9C1656.7 534.6 1657.1 533.3 1657.4 532.0C1657.8 530.7 1658.1 529.4 1658.5 528.1C1658.8 526.8 1659.2 525.5 1659.5 524.2C1659.8 523.0 1660.2 521.7 1660.5 520.4C1660.8 519.1 1661.2 517.8 1661.5 516.5C1661.8 515.2 1662.2 513.9 1662.5 512.6C1662.8 511.3 1663.2 510.0 1663.5 508.7C1663.9 507.4 1664.2 506.2 1664.5 504.9C1664.9 503.6 1665.2 502.3 1665.6 501.1C1666.0 499.8 1666.4 498.5 1666.8 497.2C1667.2 496.0 1667.6 494.7 1668.1 493.5C1668.6 492.3 1669.1 491.0 1669.7 489.8C1670.3 488.6 1670.9 487.4 1671.7 486.3C1672.4 485.1 1673.2 483.9 1674.1 482.9C1675.0 481.8 1676.0 480.8 1677.0 480.1C1678.1 479.4 1679.3 478.9 1680.5 478.8C1681.8 478.6 1683.2 478.8 1684.4 479.2C1685.6 479.5 1686.9 480.2 1688.0 480.9C1689.1 481.6 1690.1 482.6 1691.0 483.5C1692.0 484.5 1692.8 485.6 1693.6 486.7C1694.4 487.8 1695.1 489.0 1695.8 490.1C1696.6 491.3 1697.2 492.4 1697.9 493.6C1698.6 494.7 1699.3 495.9 1700.0 497.0C1700.7 498.1 1701.4 499.2 1702.2 500.3C1703.0 501.4 1703.8 502.4 1704.6 503.4C1705.5 504.4 1706.4 505.4 1707.3 506.4C1708.2 507.4 1709.2 508.3 1710.1 509.2C1711.1 510.2 1712.0 511.2 1712.9 512.1C1713.9 513.1 1714.7 514.1 1715.6 515.1C1716.5 516.1 1717.3 517.2 1718.1 518.2C1719.0 519.3 1719.7 520.4 1720.5 521.4C1721.3 522.5 1722.1 523.6 1722.8 524.7C1723.6 525.8 1724.4 526.9 1725.1 528.0C1725.8 529.1 1726.6 530.2 1727.3 531.3C1728.0 532.4 1728.8 533.6 1729.5 534.7C1730.3 535.8 1731.0 536.9 1731.7 538.0C1732.5 539.1 1733.2 540.2 1734.0 541.3C1734.8 542.4 1735.6 543.4 1736.4 544.5C1737.2 545.6 1738.0 546.6 1738.8 547.6C1739.6 548.7 1740.5 549.7 1741.4 550.7C1742.3 551.7 1743.2 552.7 1744.1 553.6C1745.0 554.6 1746.0 555.5 1747.0 556.4C1748.0 557.3 1749.0 558.2 1750.1 559.0C1751.2 559.9 1752.3 560.7 1753.5 561.4C1754.6 562.2 1755.8 562.9 1757.0 563.4C1758.1 563.9 1759.4 564.3 1760.6 564.6C1761.8 564.8 1763.0 564.9 1764.2 564.7C1765.4 564.6 1766.6 564.2 1767.8 563.6C1769.0 563.1 1770.2 562.2 1771.3 561.3C1772.4 560.4 1773.5 559.4 1774.5 558.3C1775.6 557.3 1776.5 556.1 1777.4 555.1C1778.3 554.1 1779.1 553.0 1780.0 552.1C1780.9 551.2 1781.8 550.4 1782.9 549.8C1784.0 549.1 1785.3 548.6 1786.5 548.4C1787.8 548.1 1789.3 548.1 1790.6 548.3C1791.9 548.5 1793.1 549.0 1794.1 549.7C1795.2 550.4 1796.0 551.4 1796.9 552.4C1797.7 553.4 1798.4 554.7 1799.1 555.8C1799.8 557.0 1800.5 558.2 1801.2 559.4C1801.8 560.6 1802.5 561.8 1803.1 563.0C1803.7 564.2 1804.3 565.4 1804.9 566.7C1805.4 567.9 1806.0 569.1 1806.5 570.3C1807.1 571.5 1807.6 572.7 1808.2 574.0C1808.7 575.2 1809.2 576.4 1809.7 577.6C1810.2 578.8 1810.7 580.1 1811.2 581.3C1811.7 582.5 1812.2 583.8 1812.7 585.0C1813.1 586.2 1813.6 587.5 1814.1 588.7C1814.6 589.9 1815.0 591.2 1815.5 592.4C1816.0 593.6 1816.5 594.9 1817.0 596.1C1817.5 597.4 1817.9 598.6 1818.4 599.8C1818.9 601.1 1819.4 602.3 1820.0 603.5C1820.5 604.8 1821.0 606.0 1821.5 607.2C1822.0 608.5 1822.6 609.7 1823.1 610.9C1823.7 612.1 1824.2 613.3 1824.8 614.5C1825.4 615.7 1826.0 616.9 1826.6 618.1C1827.2 619.3 1827.9 620.5 1828.5 621.7C1829.2 622.9 1829.8 624.0 1830.5 625.2C1831.2 626.3 1831.9 627.5 1832.7 628.6C1833.5 629.7 1834.3 630.7 1835.2 631.7C1836.1 632.6 1837.0 633.5 1838.1 634.3C1839.2 635.0 1840.3 635.7 1841.5 636.2C1842.8 636.7 1844.1 637.1 1845.4 637.5C1846.7 637.8 1848.1 638.0 1849.4 638.2C1850.7 638.5 1852.1 638.6 1853.3 639.0C1854.6 639.3 1855.8 639.7 1857.0 640.3C1858.2 640.8 1859.3 641.5 1860.4 642.3C1861.5 643.0 1862.6 643.9 1863.6 644.8C1864.7 645.7 1865.7 646.7 1866.7 647.5C1867.8 648.3 1868.9 649.2 1870.0 649.7C1871.2 650.3 1872.5 650.7 1873.8 650.9C1875.1 651.0 1876.5 650.9 1877.8 650.6C1879.0 650.4 1880.2 649.8 1881.4 649.2C1882.5 648.5 1883.5 647.6 1884.5 646.8C1885.5 645.9 1886.5 644.8 1887.4 643.9C1888.4 642.9 1889.3 641.9 1890.3 640.9C1891.2 640.0 1892.2 639.1 1893.2 638.1C1894.1 637.2 1895.1 636.3 1896.0 635.3C1896.9 634.4 1897.8 633.5 1898.7 632.5C1899.6 631.6 1900.5 630.6 1901.4 629.7C1902.3 628.7 1903.2 627.7 1904.1 626.7C1905.0 625.7 1905.9 624.7 1906.9 623.7C1907.9 622.7 1908.9 621.7 1909.9 620.8C1911.0 620.0 1912.1 619.1 1913.3 618.6C1914.5 618.1 1915.7 617.8 1917.0 617.8C1918.2 617.8 1919.6 618.1 1920.8 618.6C1921.9 619.1 1923.1 619.8 1924.1 620.6C1925.2 621.4 1926.1 622.5 1926.9 623.5C1927.8 624.5 1928.6 625.7 1929.4 626.8C1930.2 628.0 1930.9 629.1 1931.6 630.3C1932.3 631.4 1933.0 632.6 1933.7 633.7C1934.4 634.8 1935.1 635.9 1935.8 637.0C1936.5 638.1 1937.3 639.2 1938.1 640.3C1938.8 641.3 1939.7 642.4 1940.5 643.4C1941.4 644.4 1942.3 645.4 1943.2 646.4C1944.1 647.4 1945.0 648.3 1945.9 649.3C1946.8 650.3 1947.7 651.3 1948.6 652.3C1949.4 653.4 1950.3 654.4 1951.1 655.5C1951.9 656.5 1952.7 657.6 1953.4 658.7C1954.2 659.8 1954.9 660.9 1955.6 662.1C1956.3 663.2 1957.0 664.3 1957.7 665.5C1958.4 666.6 1959.1 667.8 1959.7 668.9C1960.4 670.1 1961.0 671.2 1961.7 672.4C1962.3 673.6 1963.0 674.7 1963.7 675.9C1964.3 677.1 1965.0 678.2 1965.6 679.4C1966.3 680.5 1967.0 681.7 1967.6 682.8C1968.3 683.9 1969.0 685.1 1969.7 686.2C1970.4 687.3 1971.2 688.4 1971.9 689.5C1972.7 690.6 1973.4 691.6 1974.2 692.7C1975.0 693.7 1975.8 694.8 1976.7 695.8C1977.5 696.8 1978.4 697.8 1979.3 698.7C1980.3 699.7 1981.2 700.6 1982.2 701.5C1983.2 702.4 1984.3 703.2 1985.3 704.1C1986.4 704.9 1987.6 705.7 1988.7 706.4C1989.9 707.2 1991.1 707.9 1992.3 708.5C1993.5 709.1 1994.8 709.7 1996.0 710.2C1997.3 710.6 1998.5 711.1 1999.8 711.4C2001.1 711.7 2002.4 711.9 2003.7 712.0C2005.0 712.1 2006.3 712.1 2007.5 712.0C2008.8 712.0 2010.1 711.8 2011.4 711.6C2012.7 711.5 2014.0 711.2 2015.4 711.0C2016.7 710.8 2018.1 710.4 2019.4 710.3C2020.7 710.2 2022.1 710.0 2023.3 710.1C2024.6 710.2 2025.8 710.6 2027.0 711.1C2028.1 711.6 2029.1 712.4 2030.3 713.1C2031.5 713.9 2032.6 714.8 2033.9 715.5C2035.1 716.1 2036.6 716.8 2038.0 717.2C2039.3 717.5 2040.7 717.6 2041.9 717.4C2043.1 717.1 2044.1 716.4 2045.1 715.6C2046.0 714.8 2046.8 713.7 2047.7 712.6C2048.5 711.6 2049.2 710.4 2050.0 709.3C2050.8 708.2 2051.5 707.1 2052.2 705.9C2052.9 704.8 2053.6 703.6 2054.2 702.5C2054.9 701.3 2055.5 700.1 2056.1 698.9C2056.7 697.8 2057.3 696.6 2057.9 695.4C2058.5 694.2 2059.0 693.0 2059.6 691.8C2060.1 690.5 2060.6 689.3 2061.2 688.1C2061.7 686.9 2062.2 685.6 2062.7 684.4C2063.1 683.2 2063.6 681.9 2064.1 680.7C2064.5 679.4 2065.0 678.2 2065.4 676.9C2065.9 675.7 2066.3 674.4 2066.7 673.1C2067.1 671.9 2067.6 670.6 2068.0 669.3C2068.4 668.1 2068.8 666.8 2069.2 665.5C2069.6 664.2 2070.0 663.0 2070.4 661.7C2070.8 660.4 2071.2 659.1 2071.6 657.9C2072.0 656.6 2072.4 655.3 2072.8 654.0C2073.2 652.7 2073.6 651.5 2074.0 650.2C2074.4 648.9 2074.9 647.6 2075.3 646.4C2075.7 645.1 2076.1 643.8 2076.6 642.6C2077.0 641.3 2077.4 640.0 2077.9 638.8C2078.3 637.5 2078.8 636.3 2079.3 635.0C2079.7 633.8 2080.2 632.5 2080.7 631.3C2081.2 630.1 2081.7 628.8 2082.3 627.6C2082.8 626.4 2083.3 625.2 2083.9 624.0C2084.4 622.7 2085.0 621.5 2085.6 620.3C2086.2 619.1 2086.8 618.0 2087.4 616.8C2088.0 615.6 2088.7 614.5 2089.3 613.3C2090.0 612.2 2090.7 611.0 2091.3 609.9C2092.0 608.8 2092.8 607.7 2093.5 606.6C2094.2 605.5 2095.0 604.4 2095.8 603.3C2096.6 602.3 2097.4 601.2 2098.2 600.2C2099.0 599.1 2099.9 598.1 2100.8 597.1C2101.7 596.1 2102.6 595.1 2103.5 594.2C2104.4 593.2 2105.4 592.3 2106.4 591.3C2107.4 590.4 2108.4 589.5 2109.4 588.6C2110.5 587.7 2111.5 586.9 2112.6 586.0C2113.7 585.2 2114.9 584.4 2116.0 583.6C2117.2 582.9 2118.3 582.2 2119.5 581.6C2120.7 581.0 2121.9 580.5 2123.1 580.1C2124.4 579.8 2125.6 579.5 2126.8 579.4C2128.0 579.3 2129.3 579.4 2130.5 579.6C2131.7 579.9 2132.9 580.4 2134.1 581.0C2135.3 581.6 2136.5 582.5 2137.7 583.3C2138.8 584.2 2139.9 585.1 2140.9 586.1C2142.0 587.0 2142.9 587.9 2143.9 588.9C2144.8 589.8 2145.7 590.7 2146.6 591.7C2147.5 592.7 2148.3 593.6 2149.2 594.6C2150.0 595.6 2150.9 596.6 2151.8 597.6C2152.6 598.6 2153.5 599.6 2154.4 600.6C2155.2 601.6 2156.1 602.6 2157.0 603.6C2157.9 604.6 2158.8 605.7 2159.7 606.6C2160.6 607.6 2161.5 608.6 2162.4 609.6C2163.4 610.6 2164.3 611.5 2165.3 612.5C2166.2 613.4 2167.2 614.3 2168.2 615.2C2169.2 616.1 2170.2 617.0 2171.1 617.9C2172.1 618.8 2173.0 619.7 2173.9 620.7C2174.8 621.7 2175.6 622.7 2176.5 623.7C2177.3 624.7 2178.1 625.8 2179.0 626.8C2179.9 627.8 2180.8 628.8 2181.8 629.8C2182.8 630.7 2183.9 631.6 2185.0 632.4C2186.2 633.1 2187.4 633.7 2188.6 634.0C2189.8 634.3 2191.1 634.3 2192.3 634.0C2193.6 633.7 2194.8 633.0 2196.0 632.3C2197.2 631.6 2198.3 630.7 2199.3 629.8C2200.3 628.8 2201.1 627.8 2202.0 626.8C2202.8 625.8 2203.6 624.8 2204.5 623.8C2205.3 622.8 2206.2 621.8 2207.2 620.8C2208.1 619.9 2209.2 619.0 2210.2 618.1C2211.3 617.2 2212.4 616.4 2213.5 615.6C2214.5 614.8 2215.6 614.0 2216.6 613.2C2217.5 612.4 2218.4 611.7 2219.3 610.8C2220.3 609.9 2221.2 609.0 2222.2 608.0C2223.1 607.0 2224.1 605.8 2225.2 604.8C2226.2 603.7 2227.4 602.6 2228.5 601.8C2229.6 601.0 2230.8 600.4 2231.9 600.0C2233.1 599.7 2234.3 599.8 2235.5 600.0C2236.7 600.2 2237.9 600.6 2239.0 601.2C2240.2 601.8 2241.3 602.5 2242.4 603.4C2243.4 604.2 2244.4 605.1 2245.3 606.0C2246.3 607.0 2247.1 608.0 2247.9 609.0C2248.8 610.0 2249.5 611.1 2250.2 612.2C2251.0 613.3 2251.6 614.5 2252.3 615.7C2252.9 616.9 2253.5 618.1 2254.1 619.3C2254.7 620.5 2255.2 621.8 2255.8 623.0C2256.3 624.3 2256.8 625.5 2257.4 626.8C2257.9 628.1 2258.4 629.3 2258.9 630.6C2259.4 631.8 2259.9 633.1 2260.4 634.3C2260.9 635.6 2261.4 636.8 2261.9 638.0C2262.4 639.2 2263.0 640.4 2263.5 641.6C2264.0 642.9 2264.6 644.0 2265.1 645.2C2265.7 646.4 2266.3 647.6 2266.8 648.8C2267.4 650.0 2268.0 651.1 2268.7 652.3C2269.3 653.5 2269.9 654.6 2270.6 655.8C2271.2 656.9 2271.9 658.1 2272.6 659.2C2273.3 660.4 2274.1 661.5 2274.8 662.7C2275.6 663.8 2276.4 664.9 2277.2 666.0C2278.1 667.1 2278.9 668.1 2279.8 669.1C2280.8 670.0 2281.7 670.9 2282.8 671.6C2283.8 672.3 2284.9 673.0 2286.1 673.4C2287.3 673.9 2288.5 674.2 2289.8 674.3C2291.1 674.4 2292.6 674.3 2294.0 674.2C2295.4 674.2 2296.9 674.0 2298.3 674.0C2299.6 674.1 2301.0 674.3 2302.2 674.7C2303.5 675.1 2304.7 675.7 2305.8 676.4C2306.9 677.1 2308.0 678.0 2309.0 678.8C2310.0 679.6 2311.0 680.5 2311.9 681.4C2312.8 682.3 2313.7 683.2 2314.6 684.2C2315.4 685.2 2316.2 686.2 2317.0 687.2C2317.8 688.3 2318.5 689.4 2319.3 690.6C2320.0 691.8 2320.7 693.1 2321.5 694.3C2322.2 695.6 2322.9 696.9 2323.8 698.0C2324.6 699.1 2325.5 700.1 2326.5 700.8C2327.6 701.4 2328.8 701.8 2330.0 701.9C2331.2 702.0 2332.5 701.7 2333.5 701.1C2334.6 700.6 2335.4 699.7 2336.2 698.6C2336.9 697.6 2337.4 696.3 2337.9 695.0C2338.4 693.7 2338.7 692.2 2339.1 690.8C2339.5 689.4 2339.8 687.9 2340.1 686.6C2340.4 685.3 2340.8 684.0 2341.1 682.8C2341.5 681.5 2341.9 680.3 2342.2 679.0C2342.6 677.8 2343.0 676.6 2343.3 675.4C2343.7 674.1 2344.1 672.8 2344.5 671.6C2344.9 670.3 2345.4 669.0 2345.8 667.7C2346.2 666.4 2346.6 665.1 2347.1 663.9C2347.5 662.6 2347.9 661.3 2348.4 660.0C2348.8 658.7 2349.2 657.5 2349.7 656.2C2350.1 654.9 2350.6 653.7 2351.0 652.4C2351.5 651.2 2351.9 650.0 2352.3 648.7C2352.8 647.5 2353.2 646.3 2353.7 645.1C2354.1 643.9 2354.6 642.7 2355.1 641.5C2355.6 640.2 2356.1 639.0 2356.7 637.6C2357.3 636.3 2357.9 634.8 2358.6 633.6C2359.4 632.4 2360.1 630.9 2361.1 630.2C2362.1 629.5 2363.3 629.2 2364.4 629.3C2365.5 629.4 2366.8 630.2 2367.8 630.8C2368.8 631.5 2369.7 632.3 2370.5 633.2C2371.3 634.2 2372.0 635.2 2372.6 636.3C2373.2 637.4 2373.7 638.7 2374.2 639.9C2374.7 641.1 2375.2 642.5 2375.6 643.8C2376.0 645.1 2376.4 646.4 2376.8 647.7C2377.2 649.0 2377.6 650.3 2378.0 651.6C2378.4 653.0 2378.8 654.3 2379.1 655.6C2379.5 656.9 2379.9 658.2 2380.2 659.5C2380.5 660.8 2380.9 662.1 2381.2 663.4C2381.5 664.8 2381.9 666.1 2382.2 667.4C2382.5 668.7 2382.8 670.0 2383.1 671.3C2383.4 672.6 2383.7 673.9 2384.0 675.2C2384.2 676.5 2384.5 677.8 2384.8 679.2C2385.1 680.5 2385.3 681.8 2385.6 683.1C2385.9 684.4 2386.1 685.7 2386.4 687.0C2386.6 688.3 2386.9 689.6 2387.1 690.9C2387.4 692.2 2387.6 693.6 2387.8 694.9C2388.1 696.2 2388.3 697.5 2388.5 698.8C2388.7 700.1 2389.0 701.4 2389.2 702.7C2389.4 704.0 2389.6 705.3 2389.8 706.6C2390.1 707.9 2390.3 709.3 2390.5 710.6C2390.7 711.9 2390.9 713.2 2391.1 714.5C2391.3 715.8 2391.5 717.1 2391.8 718.4C2392.0 719.7 2392.2 721.0 2392.4 722.3C2392.6 723.6 2392.8 724.9 2393.0 726.2C2393.2 727.6 2393.4 728.9 2393.6 730.2C2393.9 731.5 2394.1 732.8 2394.3 734.1C2394.5 735.4 2394.7 736.7 2394.9 738.0C2395.1 739.3 2395.4 740.6 2395.6 742.0C2395.8 743.3 2396.0 744.6 2396.3 745.9C2396.5 747.2 2396.7 748.5 2397.0 749.8C2397.2 751.1 2397.5 752.4 2397.7 753.7C2397.9 755.0 2398.2 756.3 2398.4 757.7C2398.7 759.0 2399.0 760.3 2399.2 761.6C2399.5 762.9 2399.7 764.2 2400.0 765.5C2400.3 766.8 2400.6 768.1 2400.8 769.4C2401.1 770.7 2401.4 772.0 2401.7 773.4C2402.0 774.7 2402.3 776.0 2402.6 777.3C2402.9 778.6 2403.2 779.9 2403.5 781.2C2403.8 782.5 2404.1 783.8 2404.4 785.1C2404.7 786.4 2405.0 787.7 2405.4 789.0C2405.7 790.3 2406.0 791.6 2406.3 792.9C2406.7 794.2 2407.0 795.4 2407.4 796.7C2407.7 798.0 2408.1 799.3 2408.4 800.6C2408.8 801.9 2409.1 803.2 2409.5 804.5C2409.9 805.8 2410.2 807.0 2410.6 808.3C2411.0 809.6 2411.4 810.9 2411.8 812.1C2412.1 813.4 2412.5 814.7 2412.9 816.0C2413.3 817.2 2413.7 818.5 2414.1 819.8C2414.5 821.0 2415.0 822.3 2415.4 823.6C2415.8 824.8 2416.2 826.1 2416.7 827.4C2417.1 828.6 2417.5 829.9 2418.0 831.1C2418.4 832.4 2418.9 833.6 2419.3 834.9C2419.8 836.1 2420.2 837.3 2420.7 838.6C2421.2 839.8 2421.6 841.1 2422.1 842.3C2422.6 843.5 2423.1 844.8 2423.5 846.0C2424.0 847.3 2424.5 848.5 2425.0 849.7C2425.5 851.0 2426.0 852.2 2426.4 853.4C2426.9 854.7 2427.4 855.9 2427.9 857.2C2428.4 858.4 2428.9 859.6 2429.4 860.9C2429.9 862.1 2430.4 863.3 2430.9 864.6C2431.4 865.8 2431.9 867.0 2432.4 868.3C2433.0 869.5 2433.5 870.7 2434.1 871.9C2434.7 873.0 2435.3 874.2 2436.0 875.3C2436.7 876.5 2437.4 877.6 2438.2 878.6C2438.9 879.7 2439.7 880.8 2440.6 881.8C2441.5 882.8 2442.4 883.8 2443.3 884.7C2444.2 885.7 2445.2 886.6 2446.2 887.5C2447.2 888.5 2448.2 889.4 2449.2 890.3C2450.2 891.2 2451.2 892.0 2452.2 892.9C2453.3 893.8 2454.3 894.7 2455.2 895.6C2456.2 896.5 2457.4 897.6 2458.1 898.3C2458.8 899.0 2459.4 899.5 2459.6 899.8"/>
<path stroke="#ee8c00" d="M455.3 1219.2C455.5 1218.5 456.0 1216.2 456.4 1214.9C456.8 1213.6 457.2 1212.4 457.6 1211.1C458.0 1209.9 458.4 1208.8 458.8 1207.6C459.2 1206.4 459.6 1205.3 460.0 1204.1C460.4 1202.9 460.8 1201.7 461.1 1200.3C461.5 1199.0 461.8 1197.6 462.2 1196.2C462.6 1194.8 463.0 1193.3 463.4 1191.9C463.8 1190.5 464.3 1189.1 464.8 1187.8C465.4 1186.5 466.0 1185.3 466.7 1184.3C467.5 1183.3 468.3 1182.3 469.3 1181.7C470.2 1181.2 471.4 1180.7 472.4 1180.8C473.4 1180.9 474.5 1181.7 475.4 1182.4C476.3 1183.2 477.1 1184.3 477.8 1185.4C478.5 1186.5 479.1 1187.9 479.6 1189.2C480.2 1190.5 480.7 1191.9 481.2 1193.3C481.7 1194.7 482.2 1196.1 482.7 1197.4C483.2 1198.7 483.7 1199.9 484.3 1201.0C484.9 1202.1 485.5 1203.1 486.1 1204.2C486.7 1205.2 487.3 1206.2 487.9 1207.4C488.5 1208.6 489.1 1210.0 489.7 1211.3C490.3 1212.6 490.9 1214.0 491.8 1215.2C492.6 1216.5 493.6 1217.8 494.6 1218.5C495.5 1219.2 496.6 1219.6 497.6 1219.4C498.5 1219.1 499.3 1218.1 500.1 1217.1C500.9 1216.1 501.6 1214.8 502.2 1213.7C502.9 1212.5 503.6 1211.3 504.1 1210.1C504.7 1208.9 505.3 1207.7 505.8 1206.5C506.4 1205.3 506.9 1204.0 507.3 1202.8C507.8 1201.5 508.2 1200.3 508.6 1199.0C509.0 1197.8 509.4 1196.5 509.8 1195.2C510.1 1193.9 510.5 1192.6 510.8 1191.3C511.1 1190.1 511.4 1188.8 511.7 1187.5C512.0 1186.2 512.2 1184.8 512.5 1183.5C512.8 1182.2 513.0 1180.9 513.2 1179.6C513.5 1178.3 513.7 1177.0 514.0 1175.7C514.2 1174.3 514.4 1173.0 514.7 1171.7C514.9 1170.4 515.1 1169.0 515.4 1167.7C515.6 1166.4 515.8 1165.1 516.1 1163.8C516.3 1162.5 516.5 1161.1 516.8 1159.8C517.0 1158.5 517.3 1157.2 517.5 1155.9C517.7 1154.6 518.0 1153.3 518.2 1151.9C518.5 1150.6 518.7 1149.3 519.0 1148.0C519.2 1146.7 519.5 1145.4 519.7 1144.1C520.0 1142.7 520.2 1141.4 520.5 1140.1C520.7 1138.8 521.0 1137.5 521.2 1136.2C521.5 1134.9 521.7 1133.6 522.0 1132.3C522.3 1131.0 522.5 1129.7 522.8 1128.3C523.0 1127.0 523.3 1125.7 523.6 1124.4C523.8 1123.1 524.1 1121.8 524.4 1120.5C524.6 1119.2 524.9 1117.9 525.2 1116.6C525.4 1115.3 525.7 1114.0 526.0 1112.7C526.3 1111.4 526.5 1110.1 526.8 1108.8C527.1 1107.5 527.4 1106.2 527.6 1104.9C527.9 1103.6 528.2 1102.3 528.5 1101.0C528.8 1099.7 529.1 1098.4 529.4 1097.1C529.6 1095.8 529.9 1094.5 530.2 1093.2C530.5 1091.9 530.8 1090.6 531.1 1089.3C531.4 1088.0 531.7 1086.7 532.0 1085.4C532.3 1084.1 532.6 1082.8 532.9 1081.5C533.2 1080.2 533.5 1078.9 533.8 1077.6C534.1 1076.3 534.4 1075.0 534.7 1073.7C535.0 1072.4 535.3 1071.1 535.6 1069.8C536.0 1068.5 536.3 1067.2 536.6 1065.9C536.9 1064.6 537.2 1063.4 537.6 1062.1C537.9 1060.8 538.2 1059.5 538.5 1058.2C538.8 1056.9 539.2 1055.6 539.5 1054.3C539.8 1053.0 540.2 1051.7 540.5 1050.4C540.8 1049.1 541.2 1047.8 541.5 1046.6C541.8 1045.3 542.2 1044.0 542.5 1042.7C542.9 1041.4 543.2 1040.1 543.5 1038.8C543.9 1037.5 544.2 1036.2 544.6 1035.0C544.9 1033.7 545.3 1032.4 545.6 1031.1C546.0 1029.8 546.3 1028.5 546.7 1027.2C547.0 1025.9 547.4 1024.7 547.7 1023.4C548.1 1022.1 548.4 1020.8 548.8 1019.5C549.2 1018.2 549.5 1016.9 549.9 1015.6C550.2 1014.4 550.6 1013.1 551.0 1011.8C551.3 1010.5 551.7 1009.2 552.0 1007.9C552.4 1006.7 552.8 1005.4 553.1 1004.1C553.5 1002.8 553.9 1001.5 554.2 1000.2C554.6 999.0 555.0 997.7 555.4 996.4C555.7 995.1 556.1 993.8 556.5 992.5C556.8 991.3 557.2 990.0 557.6 988.7C558.0 987.4 558.3 986.1 558.7 984.9C559.1 983.6 559.5 982.3 559.8 981.0C560.2 979.7 560.6 978.5 561.0 977.2C561.3 975.9 561.7 974.6 562.1 973.3C562.5 972.1 562.9 970.8 563.2 969.5C563.6 968.2 564.0 966.9 564.4 965.7C564.8 964.4 565.1 963.1 565.5 961.8C565.9 960.6 566.3 959.3 566.7 958.0C567.1 956.7 567.5 955.5 567.9 954.2C568.2 952.9 568.6 951.6 569.0 950.4C569.5 949.1 569.9 947.8 570.3 946.6C570.7 945.3 571.1 944.0 571.5 942.8C571.9 941.5 572.4 940.3 572.8 939.0C573.2 937.7 573.7 936.5 574.1 935.2C574.6 934.0 575.0 932.7 575.5 931.5C575.9 930.2 576.4 929.0 576.9 927.7C577.4 926.5 577.8 925.3 578.3 924.0C578.8 922.8 579.3 921.5 579.8 920.3C580.4 919.1 580.9 917.9 581.4 916.6C581.9 915.4 582.5 914.2 583.0 913.0C583.6 911.8 584.1 910.5 584.7 909.3C585.3 908.1 585.9 906.9 586.5 905.7C587.1 904.5 587.7 903.3 588.3 902.1C588.9 900.9 589.6 899.7 590.3 898.6C591.0 897.5 591.7 896.3 592.5 895.3C593.3 894.3 594.2 893.3 595.2 892.5C596.1 891.6 597.2 890.9 598.4 890.2C599.5 889.6 600.8 889.0 602.1 888.4C603.3 887.8 604.6 887.3 605.8 886.6C607.0 886.0 608.2 885.3 609.3 884.5C610.4 883.7 611.4 882.9 612.4 882.0C613.3 881.1 614.2 880.1 615.1 879.1C615.9 878.1 616.7 877.1 617.4 876.0C618.1 874.9 618.8 873.7 619.4 872.6C620.0 871.4 620.6 870.2 621.2 869.0C621.7 867.8 622.2 866.6 622.8 865.4C623.3 864.1 623.8 862.9 624.3 861.6C624.8 860.4 625.3 859.1 625.8 857.9C626.3 856.7 626.8 855.4 627.3 854.2C627.8 852.9 628.3 851.7 628.8 850.5C629.3 849.2 629.8 848.0 630.3 846.7C630.8 845.5 631.3 844.2 631.8 843.0C632.3 841.8 632.8 840.5 633.3 839.3C633.8 838.1 634.3 836.8 634.8 835.6C635.3 834.3 635.8 833.1 636.3 831.9C636.8 830.6 637.3 829.4 637.8 828.2C638.3 826.9 638.8 825.7 639.3 824.5C639.8 823.2 640.3 822.0 640.8 820.7C641.3 819.5 641.8 818.3 642.3 817.0C642.8 815.8 643.3 814.6 643.8 813.3C644.3 812.1 644.8 810.8 645.3 809.6C645.8 808.4 646.3 807.1 646.8 805.9C647.2 804.7 647.7 803.4 648.2 802.2C648.7 800.9 649.2 799.7 649.7 798.5C650.2 797.2 650.6 796.0 651.1 794.7C651.6 793.5 652.1 792.3 652.6 791.0C653.0 789.8 653.5 788.5 654.0 787.3C654.5 786.0 654.9 784.8 655.4 783.6C655.9 782.3 656.3 781.1 656.8 779.8C657.3 778.6 657.7 777.3 658.2 776.1C658.7 774.8 659.1 773.6 659.6 772.3C660.0 771.1 660.5 769.8 660.9 768.6C661.4 767.3 661.8 766.1 662.3 764.8C662.7 763.6 663.2 762.3 663.6 761.0C664.1 759.8 664.5 758.5 664.9 757.3C665.4 756.0 665.8 754.8 666.2 753.5C666.7 752.2 667.1 751.0 667.5 749.7C667.9 748.4 668.4 747.2 668.8 745.9C669.2 744.6 669.6 743.4 670.0 742.1C670.4 740.8 670.8 739.6 671.2 738.3C671.7 737.0 672.1 735.7 672.5 734.5C672.9 733.2 673.3 731.9 673.7 730.6C674.1 729.4 674.5 728.1 674.9 726.8C675.3 725.6 675.7 724.3 676.1 723.0C676.6 721.7 677.0 720.5 677.4 719.2C677.8 717.9 678.2 716.7 678.7 715.4C679.1 714.1 679.5 712.9 680.0 711.6C680.4 710.4 680.8 709.1 681.3 707.8C681.7 706.6 682.2 705.3 682.6 704.1C683.1 702.8 683.6 701.6 684.0 700.3C684.5 699.1 685.0 697.8 685.5 696.6C686.0 695.4 686.5 694.1 687.0 692.9C687.5 691.7 688.0 690.4 688.5 689.2C689.0 688.0 689.6 686.8 690.1 685.6C690.7 684.3 691.2 683.1 691.8 681.9C692.4 680.7 692.9 679.5 693.5 678.3C694.2 677.2 694.8 676.0 695.4 674.8C696.0 673.6 696.7 672.5 697.4 671.3C698.1 670.1 698.7 669.0 699.5 667.9C700.2 666.7 700.9 665.6 701.8 664.6C702.6 663.6 703.5 662.6 704.5 661.7C705.5 660.8 706.5 660.0 707.7 659.3C708.9 658.7 710.3 658.1 711.6 657.9C712.9 657.6 714.3 657.5 715.5 657.8C716.8 658.0 718.0 658.6 719.1 659.2C720.2 659.9 721.3 660.9 722.2 661.8C723.2 662.7 724.1 663.8 724.9 664.8C725.7 665.9 726.4 667.0 727.1 668.1C727.7 669.2 728.3 670.4 728.9 671.6C729.5 672.8 730.0 674.0 730.5 675.2C731.1 676.5 731.6 677.7 732.0 679.0C732.5 680.2 733.0 681.5 733.5 682.7C733.9 684.0 734.4 685.3 734.9 686.5C735.3 687.8 735.8 689.1 736.3 690.4C736.7 691.6 737.2 692.9 737.6 694.2C738.1 695.5 738.5 696.7 738.9 698.0C739.4 699.3 739.8 700.6 740.2 701.8C740.7 703.1 741.1 704.4 741.5 705.6C741.9 706.9 742.3 708.1 742.8 709.4C743.2 710.7 743.6 711.9 744.0 713.2C744.4 714.4 744.8 715.7 745.2 716.9C745.6 718.1 746.0 719.4 746.4 720.6C746.8 721.9 747.3 723.1 747.7 724.4C748.1 725.6 748.5 726.8 748.9 728.1C749.3 729.3 749.7 730.6 750.2 731.8C750.6 733.1 751.0 734.3 751.5 735.6C751.9 736.8 752.3 738.1 752.8 739.3C753.2 740.6 753.7 741.9 754.1 743.1C754.6 744.4 755.1 745.7 755.5 746.9C756.0 748.2 756.5 749.5 757.0 750.8C757.5 752.1 758.0 753.4 758.5 754.7C759.1 756.0 759.6 757.3 760.2 758.6C760.7 759.9 761.3 761.3 761.9 762.5C762.5 763.7 763.1 765.0 763.9 766.0C764.7 767.0 765.5 768.0 766.4 768.7C767.3 769.4 768.4 770.0 769.5 770.2C770.6 770.4 771.9 770.4 773.0 770.0C774.1 769.5 775.1 768.5 775.9 767.5C776.8 766.4 777.5 765.0 778.2 763.8C778.8 762.5 779.4 761.2 779.9 760.0C780.4 758.7 780.8 757.4 781.3 756.2C781.7 754.9 782.2 753.6 782.6 752.4C783.0 751.1 783.5 749.9 783.9 748.6C784.4 747.3 784.8 746.1 785.2 744.8C785.6 743.6 786.1 742.3 786.5 741.0C786.9 739.8 787.3 738.5 787.7 737.2C788.1 736.0 788.6 734.7 789.0 733.5C789.4 732.2 789.8 730.9 790.2 729.7C790.6 728.4 791.0 727.1 791.4 725.9C791.7 724.6 792.1 723.3 792.5 722.0C792.9 720.8 793.3 719.5 793.7 718.2C794.0 716.9 794.4 715.6 794.8 714.4C795.2 713.1 795.5 711.8 795.9 710.5C796.3 709.2 796.6 708.0 797.0 706.7C797.4 705.4 797.7 704.1 798.1 702.8C798.5 701.5 798.8 700.2 799.2 699.0C799.5 697.7 799.9 696.4 800.2 695.1C800.6 693.8 801.0 692.5 801.3 691.2C801.7 690.0 802.0 688.7 802.4 687.4C802.7 686.1 803.1 684.8 803.4 683.5C803.8 682.2 804.1 680.9 804.5 679.7C804.9 678.4 805.2 677.1 805.6 675.8C805.9 674.5 806.3 673.2 806.6 672.0C807.0 670.7 807.3 669.4 807.7 668.1C808.1 666.8 808.4 665.5 808.8 664.2C809.1 663.0 809.5 661.7 809.9 660.4C810.2 659.1 810.6 657.8 810.9 656.5C811.3 655.3 811.7 654.0 812.0 652.7C812.4 651.4 812.8 650.1 813.1 648.9C813.5 647.6 813.9 646.3 814.2 645.0C814.6 643.7 815.0 642.5 815.3 641.2C815.7 639.9 816.1 638.6 816.4 637.4C816.8 636.1 817.2 634.8 817.6 633.5C817.9 632.2 818.3 630.9 818.7 629.7C819.1 628.4 819.5 627.1 819.8 625.8C820.2 624.6 820.6 623.3 821.0 622.0C821.4 620.7 821.8 619.5 822.1 618.2C822.5 616.9 822.9 615.6 823.3 614.3C823.7 613.1 824.1 611.8 824.5 610.5C824.9 609.2 825.3 608.0 825.7 606.7C826.2 605.4 826.6 604.2 827.0 602.9C827.4 601.6 827.9 600.4 828.4 599.1C828.8 597.9 829.3 596.6 829.8 595.4C830.2 594.1 830.7 592.9 831.3 591.7C831.8 590.5 832.3 589.2 832.9 588.0C833.4 586.8 834.0 585.6 834.6 584.4C835.2 583.2 835.8 582.0 836.4 580.9C837.1 579.7 837.7 578.5 838.4 577.4C839.1 576.2 839.8 575.1 840.6 574.0C841.4 572.8 842.1 571.7 843.0 570.6C843.8 569.6 844.7 568.6 845.7 567.9C846.7 567.1 847.8 566.5 849.0 566.2C850.3 565.9 851.7 565.9 853.0 566.1C854.4 566.3 855.8 566.8 857.0 567.4C858.2 568.0 859.3 568.8 860.3 569.7C861.3 570.6 862.1 571.6 862.9 572.7C863.7 573.7 864.5 574.9 865.2 576.1C865.9 577.2 866.6 578.4 867.3 579.5C868.1 580.6 868.8 581.8 869.5 582.9C870.2 584.0 871.0 585.0 871.8 586.1C872.6 587.2 873.4 588.2 874.2 589.2C875.0 590.2 875.9 591.2 876.8 592.2C877.7 593.2 878.7 594.1 879.7 595.0C880.6 595.9 881.7 596.8 882.7 597.6C883.8 598.4 884.9 599.2 886.0 600.0C887.1 600.8 888.2 601.5 889.4 602.1C890.6 602.8 891.8 603.4 893.0 604.0C894.2 604.6 895.4 605.1 896.7 605.6C897.9 606.1 899.2 606.5 900.5 606.8C901.8 607.2 903.1 607.5 904.4 607.7C905.7 608.0 907.1 608.1 908.4 608.2C909.7 608.3 911.0 608.4 912.3 608.3C913.6 608.3 914.9 608.1 916.2 607.9C917.5 607.7 918.8 607.4 920.0 607.0C921.2 606.6 922.4 606.1 923.6 605.5C924.7 604.9 925.8 604.2 926.9 603.4C928.0 602.6 929.0 601.7 930.0 600.8C931.0 599.9 932.0 598.9 933.0 597.9C934.0 596.9 935.0 595.9 936.0 594.9C937.0 594.0 937.9 593.0 939.0 592.1C940.0 591.2 941.0 590.3 942.1 589.6C943.2 588.9 944.3 588.2 945.5 587.7C946.6 587.2 947.9 586.8 949.1 586.6C950.4 586.3 951.7 586.2 953.1 586.1C954.4 586.0 955.8 586.1 957.2 586.1C958.5 586.2 959.9 586.3 961.3 586.4C962.6 586.5 964.0 586.6 965.3 586.7C966.6 586.7 967.9 586.8 969.1 586.6C970.4 586.4 971.6 586.1 972.8 585.7C974.0 585.2 975.2 584.5 976.4 583.9C977.6 583.2 978.8 582.4 980.0 581.8C981.3 581.2 982.6 580.6 983.8 580.3C985.1 579.9 986.5 579.7 987.8 579.7C989.0 579.8 990.4 580.1 991.6 580.5C992.8 581.0 994.0 581.7 995.1 582.4C996.2 583.2 997.2 584.1 998.1 585.1C999.0 586.0 999.8 587.1 1000.6 588.1C1001.4 589.2 1002.2 590.3 1003.0 591.4C1003.7 592.5 1004.4 593.7 1005.3 594.7C1006.1 595.8 1006.9 596.8 1007.8 597.8C1008.7 598.8 1009.7 599.7 1010.6 600.7C1011.6 601.6 1012.6 602.5 1013.6 603.5C1014.5 604.4 1015.5 605.3 1016.5 606.3C1017.4 607.2 1018.3 608.2 1019.2 609.2C1020.0 610.2 1020.9 611.2 1021.7 612.3C1022.5 613.4 1023.2 614.4 1024.0 615.5C1024.7 616.6 1025.4 617.8 1026.1 618.9C1026.8 620.0 1027.5 621.2 1028.1 622.3C1028.8 623.5 1029.4 624.7 1030.0 625.9C1030.7 627.0 1031.3 628.2 1031.9 629.4C1032.5 630.6 1033.1 631.8 1033.7 633.0C1034.4 634.2 1035.0 635.4 1035.6 636.5C1036.2 637.7 1036.8 638.9 1037.5 640.1C1038.1 641.2 1038.7 642.4 1039.4 643.5C1040.0 644.7 1040.7 645.9 1041.4 647.0C1042.0 648.2 1042.7 649.3 1043.3 650.5C1044.0 651.6 1044.7 652.8 1045.3 653.9C1046.0 655.1 1046.7 656.2 1047.3 657.4C1048.0 658.5 1048.7 659.7 1049.4 660.8C1050.1 661.9 1050.9 663.0 1051.7 664.1C1052.5 665.1 1053.4 666.1 1054.4 667.0C1055.4 668.0 1056.6 668.8 1057.7 669.6C1058.9 670.3 1060.1 671.0 1061.4 671.5C1062.6 671.9 1064.0 672.3 1065.2 672.5C1066.5 672.7 1067.7 672.7 1068.9 672.5C1070.1 672.3 1071.3 671.9 1072.4 671.4C1073.6 670.9 1074.6 670.2 1075.7 669.4C1076.8 668.6 1077.8 667.7 1078.8 666.8C1079.8 665.8 1080.8 664.8 1081.8 663.8C1082.7 662.7 1083.7 661.7 1084.7 660.6C1085.6 659.6 1086.6 658.6 1087.5 657.6C1088.5 656.6 1089.4 655.7 1090.4 654.8C1091.4 653.9 1092.3 653.0 1093.3 652.1C1094.3 651.3 1095.2 650.4 1096.2 649.5C1097.2 648.7 1098.1 647.8 1099.1 646.9C1100.0 646.0 1101.0 645.1 1102.0 644.2C1103.0 643.3 1103.9 642.4 1104.9 641.5C1105.9 640.6 1106.9 639.7 1108.0 638.9C1109.0 638.1 1110.0 637.2 1111.1 636.5C1112.2 635.8 1113.3 635.0 1114.5 634.4C1115.6 633.8 1116.8 633.2 1118.0 632.8C1119.2 632.3 1120.5 632.0 1121.8 631.7C1123.1 631.3 1124.5 631.1 1125.8 630.9C1127.2 630.7 1128.6 630.6 1130.0 630.4C1131.3 630.2 1132.7 630.1 1134.1 629.9C1135.4 629.8 1136.8 629.6 1138.1 629.3C1139.4 629.1 1140.7 628.8 1142.0 628.4C1143.2 628.1 1144.5 627.7 1145.7 627.2C1146.9 626.7 1148.0 626.2 1149.2 625.6C1150.3 625.0 1151.4 624.4 1152.5 623.7C1153.6 623.1 1154.7 622.3 1155.7 621.6C1156.8 620.8 1157.8 620.0 1158.8 619.2C1159.8 618.4 1160.8 617.5 1161.8 616.6C1162.8 615.8 1163.8 614.8 1164.7 613.9C1165.7 613.0 1166.6 612.0 1167.6 611.1C1168.5 610.1 1169.4 609.1 1170.4 608.1C1171.3 607.1 1172.2 606.1 1173.2 605.1C1174.1 604.1 1175.0 603.1 1176.0 602.1C1176.9 601.1 1177.8 600.1 1178.8 599.1C1179.7 598.1 1180.6 597.1 1181.6 596.1C1182.6 595.1 1183.5 594.1 1184.5 593.2C1185.5 592.2 1186.5 591.3 1187.5 590.4C1188.5 589.5 1189.5 588.6 1190.5 587.7C1191.6 586.9 1192.6 586.0 1193.7 585.3C1194.8 584.5 1195.9 583.8 1197.0 583.1C1198.2 582.5 1199.3 581.9 1200.5 581.4C1201.6 580.9 1202.8 580.4 1204.0 580.1C1205.3 579.8 1206.5 579.5 1207.8 579.4C1209.1 579.3 1210.4 579.3 1211.7 579.4C1213.0 579.5 1214.4 579.7 1215.7 580.0C1217.0 580.4 1218.4 580.8 1219.7 581.3C1221.0 581.8 1222.2 582.4 1223.4 583.0C1224.6 583.6 1225.8 584.4 1226.9 585.1C1227.9 585.9 1228.9 586.7 1229.9 587.5C1230.9 588.4 1231.7 589.3 1232.6 590.2C1233.5 591.2 1234.3 592.2 1235.2 593.2C1236.0 594.2 1236.9 595.2 1237.7 596.3C1238.6 597.4 1239.5 598.5 1240.4 599.6C1241.3 600.7 1242.2 601.9 1243.2 602.9C1244.2 603.9 1245.2 605.0 1246.3 605.8C1247.3 606.5 1248.4 607.2 1249.5 607.6C1250.6 607.9 1251.7 607.9 1252.8 607.7C1253.9 607.4 1255.0 606.8 1256.0 606.0C1257.1 605.3 1258.2 604.2 1259.1 603.2C1260.1 602.1 1260.9 600.9 1261.8 599.8C1262.6 598.6 1263.3 597.4 1264.1 596.2C1264.8 595.1 1265.5 593.9 1266.3 592.9C1267.2 591.8 1268.0 590.9 1268.9 590.0C1269.9 589.1 1270.9 588.3 1272.0 587.5C1273.1 586.8 1274.2 586.1 1275.4 585.5C1276.5 584.8 1277.7 584.2 1278.9 583.7C1280.2 583.1 1281.4 582.6 1282.6 582.0C1283.8 581.5 1285.1 581.0 1286.3 580.4C1287.5 579.9 1288.7 579.3 1289.9 578.7C1291.0 578.1 1292.2 577.5 1293.3 576.8C1294.4 576.1 1295.5 575.3 1296.5 574.5C1297.5 573.7 1298.5 572.8 1299.5 571.8C1300.4 570.9 1301.4 569.9 1302.3 568.9C1303.3 568.0 1304.3 567.0 1305.4 566.2C1306.5 565.4 1307.6 564.6 1308.8 564.1C1310.0 563.5 1311.3 563.1 1312.6 562.9C1314.0 562.7 1315.4 562.7 1316.7 563.0C1318.0 563.2 1319.3 563.6 1320.4 564.2C1321.5 564.8 1322.5 565.6 1323.4 566.5C1324.4 567.4 1325.2 568.4 1326.0 569.5C1326.8 570.5 1327.6 571.7 1328.3 572.8C1329.1 573.9 1329.9 575.0 1330.7 576.1C1331.4 577.3 1332.2 578.4 1332.9 579.5C1333.7 580.6 1334.4 581.8 1335.2 582.9C1335.9 584.0 1336.7 585.1 1337.4 586.3C1338.2 587.4 1338.9 588.5 1339.7 589.6C1340.4 590.7 1341.2 591.8 1341.9 592.9C1342.7 594.0 1343.4 595.1 1344.2 596.2C1345.0 597.3 1345.7 598.4 1346.5 599.4C1347.3 600.5 1348.0 601.5 1348.8 602.6C1349.6 603.6 1350.4 604.7 1351.2 605.7C1352.0 606.7 1352.8 607.8 1353.5 608.8C1354.3 609.8 1355.1 610.9 1355.9 611.9C1356.7 613.0 1357.5 614.0 1358.2 615.1C1359.0 616.2 1359.8 617.2 1360.6 618.3C1361.3 619.4 1362.1 620.6 1362.8 621.7C1363.6 622.9 1364.3 624.0 1365.0 625.2C1365.8 626.4 1366.5 627.7 1367.2 628.9C1367.9 630.1 1368.6 631.4 1369.4 632.6C1370.1 633.8 1370.9 634.9 1371.7 636.0C1372.5 637.0 1373.3 638.0 1374.3 638.9C1375.2 639.8 1376.1 640.5 1377.2 641.1C1378.2 641.7 1379.4 642.1 1380.6 642.4C1381.8 642.6 1383.1 642.7 1384.4 642.8C1385.7 642.8 1387.1 642.7 1388.5 642.7C1389.9 642.6 1391.3 642.5 1392.7 642.5C1394.1 642.5 1395.5 642.5 1396.8 642.7C1398.1 642.9 1399.4 643.2 1400.7 643.6C1401.9 644.0 1403.1 644.6 1404.3 645.2C1405.5 645.8 1406.6 646.5 1407.8 647.2C1408.9 647.9 1410.0 648.7 1411.2 649.3C1412.3 649.9 1413.5 650.6 1414.6 651.0C1415.8 651.5 1417.0 651.9 1418.3 652.1C1419.5 652.3 1420.9 652.4 1422.2 652.3C1423.5 652.3 1424.8 652.1 1426.2 651.8C1427.5 651.6 1428.8 651.2 1430.2 650.8C1431.5 650.3 1432.8 649.8 1434.1 649.3C1435.4 648.8 1436.7 648.2 1437.9 647.6C1439.1 647.0 1440.3 646.4 1441.4 645.8C1442.6 645.1 1443.7 644.4 1444.7 643.7C1445.8 642.9 1446.8 642.2 1447.8 641.4C1448.8 640.5 1449.7 639.7 1450.6 638.7C1451.5 637.8 1452.4 636.9 1453.2 635.8C1454.1 634.8 1454.9 633.7 1455.6 632.5C1456.4 631.4 1457.1 630.2 1457.8 629.1C1458.6 628.0 1459.3 626.9 1460.1 625.9C1460.9 624.8 1461.7 624.0 1462.5 623.0C1463.2 621.9 1464.0 620.8 1464.7 619.7C1465.4 618.6 1466.1 617.4 1466.7 616.3C1467.4 615.1 1468.0 613.9 1468.7 612.6C1469.3 611.4 1470.0 610.2 1470.6 609.0C1471.3 607.8 1471.9 606.6 1472.6 605.5C1473.2 604.3 1473.9 603.2 1474.6 602.1C1475.3 601.0 1476.0 599.9 1476.7 598.9C1477.4 597.8 1478.2 596.8 1479.0 595.7C1479.7 594.7 1480.5 593.7 1481.4 592.7C1482.2 591.7 1483.1 590.8 1484.0 589.8C1484.9 588.8 1485.8 587.9 1486.8 586.9C1487.8 586.0 1488.9 585.1 1489.9 584.1C1491.0 583.2 1492.1 582.3 1493.3 581.5C1494.5 580.6 1495.7 579.8 1496.9 579.1C1498.1 578.5 1499.3 577.8 1500.5 577.4C1501.8 577.0 1503.0 576.8 1504.2 576.7C1505.5 576.7 1506.7 576.9 1507.9 577.3C1509.1 577.6 1510.2 578.3 1511.4 579.0C1512.6 579.6 1513.7 580.5 1514.9 581.2C1516.1 582.0 1517.3 582.8 1518.5 583.4C1519.7 583.9 1520.9 584.4 1522.2 584.7C1523.4 585.0 1524.7 585.1 1526.0 585.2C1527.3 585.3 1528.6 585.3 1529.9 585.3C1531.2 585.3 1532.5 585.3 1533.8 585.4C1535.1 585.5 1536.4 585.7 1537.7 585.9C1539.0 586.2 1540.3 586.6 1541.5 586.9C1542.8 587.2 1544.1 587.7 1545.3 588.0C1546.6 588.3 1547.9 588.6 1549.2 588.8C1550.5 589.0 1551.7 589.0 1553.0 588.9C1554.3 588.8 1555.6 588.5 1557.0 588.2C1558.3 587.9 1559.6 587.4 1560.9 586.9C1562.2 586.5 1563.5 586.0 1564.8 585.6C1566.1 585.2 1567.4 584.8 1568.6 584.6C1569.9 584.5 1571.1 584.4 1572.4 584.5C1573.6 584.6 1574.8 584.9 1576.0 585.4C1577.1 585.8 1578.3 586.3 1579.5 587.0C1580.6 587.6 1581.7 588.4 1582.9 589.1C1584.0 589.9 1585.1 590.8 1586.2 591.7C1587.3 592.6 1588.4 593.5 1589.5 594.5C1590.5 595.4 1591.6 596.3 1592.7 597.2C1593.8 598.1 1594.9 598.9 1596.0 599.8C1597.0 600.6 1598.1 601.3 1599.2 602.0C1600.4 602.7 1601.5 603.4 1602.6 603.9C1603.8 604.4 1604.9 604.9 1606.1 605.2C1607.3 605.6 1608.5 605.8 1609.8 605.9C1611.0 606.0 1612.3 606.0 1613.7 605.9C1615.0 605.7 1616.4 605.4 1617.7 605.2C1619.1 604.9 1620.5 604.5 1621.8 604.2C1623.2 603.9 1624.5 603.6 1625.9 603.3C1627.2 603.0 1628.5 602.8 1629.8 602.6C1631.2 602.4 1632.4 602.2 1633.7 602.1C1635.0 601.9 1636.3 601.8 1637.6 601.7C1638.9 601.5 1640.2 601.4 1641.5 601.3C1642.8 601.2 1644.2 601.1 1645.5 601.0C1646.8 600.9 1648.1 600.8 1649.4 600.8C1650.8 600.7 1652.1 600.6 1653.4 600.5C1654.7 600.4 1656.1 600.4 1657.4 600.3C1658.7 600.2 1660.1 600.1 1661.4 600.1C1662.8 600.0 1664.1 599.9 1665.5 599.9C1666.8 599.8 1668.2 599.7 1669.6 599.6C1670.9 599.6 1672.3 599.5 1673.6 599.5C1675.0 599.5 1676.3 599.5 1677.6 599.6C1678.9 599.8 1680.2 599.9 1681.5 600.1C1682.8 600.4 1684.0 600.7 1685.3 601.1C1686.5 601.4 1687.8 601.9 1689.0 602.4C1690.2 602.8 1691.4 603.4 1692.7 603.9C1693.9 604.4 1695.1 605.0 1696.3 605.6C1697.5 606.2 1698.7 606.8 1699.9 607.4C1701.1 608.0 1702.3 608.5 1703.6 609.1C1704.8 609.6 1706.1 610.2 1707.3 610.7C1708.6 611.2 1709.8 611.7 1711.1 612.2C1712.4 612.6 1713.7 613.1 1714.9 613.6C1716.2 614.0 1717.5 614.5 1718.7 615.0C1720.0 615.4 1721.2 615.9 1722.5 616.4C1723.7 617.0 1724.9 617.5 1726.1 618.1C1727.2 618.6 1728.4 619.2 1729.5 619.9C1730.7 620.5 1731.8 621.3 1732.8 622.0C1733.9 622.7 1734.9 623.5 1735.9 624.3C1737.0 625.2 1738.0 626.0 1738.9 626.9C1739.9 627.8 1740.9 628.6 1741.9 629.6C1742.9 630.5 1743.8 631.4 1744.8 632.3C1745.8 633.3 1746.7 634.2 1747.7 635.1C1748.7 636.1 1749.7 637.0 1750.7 638.0C1751.8 638.9 1752.8 639.8 1753.8 640.7C1754.9 641.6 1756.0 642.5 1757.1 643.3C1758.2 644.1 1759.4 644.9 1760.5 645.6C1761.6 646.2 1762.8 646.8 1764.0 647.2C1765.1 647.6 1766.3 647.8 1767.5 647.9C1768.7 647.9 1769.9 647.7 1771.0 647.3C1772.2 646.9 1773.3 646.2 1774.5 645.5C1775.7 644.7 1776.8 643.8 1778.0 642.9C1779.2 642.1 1780.4 641.1 1781.6 640.3C1782.8 639.6 1784.0 638.8 1785.2 638.3C1786.5 637.7 1787.7 637.3 1788.9 637.0C1790.2 636.8 1791.4 636.8 1792.7 636.9C1793.9 637.0 1795.1 637.3 1796.3 637.6C1797.6 638.0 1798.8 638.6 1800.0 639.1C1801.2 639.7 1802.4 640.4 1803.6 641.1C1804.8 641.8 1805.9 642.6 1807.1 643.3C1808.2 644.0 1809.4 644.8 1810.5 645.5C1811.7 646.3 1812.8 647.0 1813.9 647.7C1815.0 648.4 1816.1 649.1 1817.2 649.9C1818.4 650.6 1819.5 651.3 1820.6 651.9C1821.7 652.6 1822.9 653.3 1824.0 653.9C1825.1 654.6 1826.3 655.2 1827.5 655.8C1828.6 656.4 1829.8 657.0 1831.0 657.5C1832.2 658.0 1833.5 658.6 1834.7 659.1C1835.9 659.6 1837.2 660.0 1838.5 660.5C1839.8 660.9 1841.0 661.4 1842.3 661.8C1843.6 662.2 1844.9 662.6 1846.2 663.0C1847.5 663.3 1848.8 663.7 1850.1 664.0C1851.4 664.4 1852.7 664.7 1854.0 665.1C1855.2 665.5 1856.5 665.9 1857.7 666.4C1858.9 666.9 1860.1 667.4 1861.2 668.1C1862.4 668.7 1863.5 669.5 1864.6 670.2C1865.7 671.0 1866.8 671.8 1867.9 672.5C1869.0 673.2 1870.1 674.0 1871.3 674.7C1872.4 675.4 1873.6 676.0 1874.7 676.7C1875.9 677.4 1877.0 678.0 1878.2 678.7C1879.3 679.4 1880.5 680.0 1881.6 680.7C1882.8 681.3 1883.9 682.0 1885.1 682.7C1886.2 683.4 1887.3 684.1 1888.4 684.8C1889.5 685.6 1890.6 686.3 1891.7 687.1C1892.8 687.9 1893.9 688.7 1895.0 689.4C1896.1 690.2 1897.2 691.0 1898.3 691.8C1899.4 692.5 1900.4 693.3 1901.6 694.0C1902.7 694.8 1903.8 695.5 1904.9 696.2C1906.1 696.9 1907.2 697.5 1908.3 698.2C1909.5 698.8 1910.7 699.4 1911.9 700.1C1913.0 700.7 1914.2 701.3 1915.4 701.9C1916.6 702.5 1917.8 703.1 1918.9 703.8C1920.1 704.4 1921.3 705.1 1922.4 705.7C1923.6 706.4 1924.7 707.1 1925.9 707.8C1927.0 708.6 1928.2 709.3 1929.3 710.0C1930.4 710.7 1931.6 711.4 1932.8 712.0C1933.9 712.6 1935.1 713.2 1936.4 713.6C1937.6 714.0 1938.9 714.4 1940.2 714.6C1941.5 714.8 1942.9 714.8 1944.3 714.8C1945.7 714.8 1947.1 714.6 1948.5 714.7C1949.9 714.7 1951.2 714.8 1952.5 715.1C1953.7 715.5 1954.9 716.0 1956.0 716.7C1957.1 717.3 1958.1 718.1 1959.1 719.0C1960.1 719.8 1961.0 720.8 1961.9 721.7C1962.8 722.7 1963.6 723.7 1964.4 724.7C1965.2 725.7 1966.0 726.8 1966.7 727.9C1967.4 729.0 1968.1 730.2 1968.8 731.3C1969.5 732.5 1970.1 733.7 1970.8 734.9C1971.4 736.1 1972.0 737.3 1972.5 738.5C1973.1 739.8 1973.7 741.0 1974.2 742.2C1974.8 743.5 1975.3 744.7 1975.9 746.0C1976.4 747.2 1976.9 748.4 1977.5 749.7C1978.0 750.9 1978.5 752.1 1979.0 753.4C1979.5 754.6 1980.0 755.8 1980.5 757.1C1981.0 758.3 1981.5 759.5 1982.0 760.8C1982.4 762.0 1982.9 763.2 1983.4 764.5C1983.9 765.7 1984.4 766.9 1984.8 768.1C1985.3 769.4 1985.8 770.6 1986.2 771.9C1986.7 773.1 1987.2 774.3 1987.6 775.6C1988.1 776.8 1988.6 778.0 1989.0 779.3C1989.5 780.5 1990.0 781.8 1990.4 783.0C1990.9 784.3 1991.3 785.5 1991.8 786.8C1992.3 788.0 1992.7 789.3 1993.2 790.5C1993.7 791.8 1994.1 793.0 1994.6 794.2C1995.1 795.5 1995.5 796.8 1996.0 798.0C1996.5 799.2 1997.0 800.5 1997.4 801.7C1997.9 803.0 1998.4 804.2 1998.9 805.5C1999.3 806.7 1999.8 808.0 2000.3 809.2C2000.8 810.5 2001.3 811.7 2001.8 813.0C2002.3 814.2 2002.8 815.4 2003.2 816.7C2003.7 817.9 2004.2 819.2 2004.8 820.4C2005.3 821.6 2005.8 822.9 2006.3 824.1C2006.8 825.4 2007.3 826.6 2007.8 827.8C2008.3 829.1 2008.9 830.3 2009.4 831.5C2009.9 832.7 2010.5 833.9 2011.0 835.2C2011.5 836.4 2012.1 837.6 2012.6 838.8C2013.2 840.0 2013.7 841.2 2014.3 842.5C2014.9 843.7 2015.4 844.9 2016.0 846.1C2016.6 847.3 2017.1 848.5 2017.7 849.6C2018.3 850.8 2018.9 852.0 2019.5 853.2C2020.1 854.4 2020.8 855.6 2021.4 856.7C2022.1 857.8 2022.8 859.0 2023.5 860.1C2024.2 861.2 2025.0 862.3 2025.8 863.4C2026.7 864.4 2027.6 865.4 2028.5 866.4C2029.5 867.3 2030.5 868.3 2031.5 869.1C2032.6 869.9 2033.7 870.6 2034.9 871.2C2036.1 871.8 2037.4 872.3 2038.7 872.5C2040.0 872.8 2041.4 872.8 2042.7 872.7C2044.0 872.6 2045.3 872.2 2046.6 871.8C2047.8 871.4 2049.0 870.8 2050.2 870.1C2051.3 869.5 2052.4 868.7 2053.4 867.9C2054.4 867.1 2055.4 866.2 2056.3 865.2C2057.3 864.3 2058.2 863.3 2059.0 862.2C2059.9 861.2 2060.7 860.1 2061.4 859.0C2062.2 857.8 2063.0 856.7 2063.7 855.6C2064.4 854.4 2065.1 853.3 2065.7 852.1C2066.4 851.0 2067.0 849.8 2067.6 848.6C2068.2 847.4 2068.8 846.2 2069.4 845.0C2070.0 843.8 2070.5 842.6 2071.0 841.4C2071.6 840.2 2072.1 838.9 2072.6 837.7C2073.1 836.5 2073.5 835.2 2074.0 834.0C2074.5 832.7 2074.9 831.5 2075.4 830.2C2075.8 829.0 2076.2 827.7 2076.7 826.5C2077.1 825.2 2077.5 823.9 2077.9 822.7C2078.3 821.4 2078.7 820.1 2079.1 818.9C2079.5 817.6 2079.9 816.3 2080.3 815.0C2080.7 813.8 2081.1 812.5 2081.5 811.2C2081.9 809.9 2082.2 808.7 2082.6 807.4C2083.0 806.1 2083.4 804.8 2083.8 803.5C2084.1 802.3 2084.5 801.0 2084.9 799.7C2085.3 798.4 2085.6 797.1 2086.0 795.9C2086.4 794.6 2086.7 793.3 2087.1 792.0C2087.5 790.7 2087.9 789.4 2088.2 788.2C2088.6 786.9 2089.0 785.6 2089.4 784.3C2089.8 783.0 2090.2 781.8 2090.6 780.5C2091.0 779.2 2091.3 777.9 2091.8 776.7C2092.2 775.4 2092.6 774.1 2093.0 772.9C2093.4 771.6 2093.8 770.3 2094.2 769.1C2094.7 767.8 2095.1 766.5 2095.5 765.3C2096.0 764.0 2096.4 762.8 2096.9 761.5C2097.3 760.3 2097.8 759.0 2098.3 757.8C2098.7 756.5 2099.2 755.3 2099.7 754.1C2100.2 752.8 2100.7 751.6 2101.2 750.4C2101.8 749.1 2102.3 747.9 2102.8 746.7C2103.4 745.5 2103.9 744.3 2104.5 743.1C2105.1 741.9 2105.6 740.6 2106.3 739.5C2106.9 738.3 2107.5 737.1 2108.2 736.0C2109.0 734.9 2109.7 733.7 2110.5 732.7C2111.4 731.6 2112.3 730.6 2113.3 729.7C2114.3 728.8 2115.4 727.9 2116.5 727.3C2117.7 726.7 2119.0 726.3 2120.2 726.2C2121.5 726.1 2122.9 726.3 2124.1 726.6C2125.4 726.9 2126.6 727.5 2127.8 728.0C2129.0 728.6 2130.2 729.4 2131.3 730.0C2132.5 730.7 2133.7 731.5 2134.9 732.2C2136.1 732.8 2137.4 733.5 2138.7 733.9C2139.9 734.3 2141.3 734.6 2142.5 734.6C2143.8 734.5 2145.1 734.3 2146.2 733.8C2147.3 733.2 2148.3 732.4 2149.2 731.5C2150.1 730.6 2150.8 729.4 2151.5 728.3C2152.2 727.1 2152.7 725.8 2153.3 724.5C2153.9 723.2 2154.4 721.9 2154.9 720.7C2155.4 719.4 2155.9 718.1 2156.3 716.9C2156.8 715.6 2157.2 714.3 2157.7 713.1C2158.1 711.8 2158.5 710.6 2158.9 709.3C2159.3 708.1 2159.7 706.8 2160.1 705.5C2160.5 704.3 2160.9 703.0 2161.3 701.7C2161.7 700.5 2162.1 699.2 2162.4 697.9C2162.8 696.6 2163.2 695.4 2163.6 694.1C2163.9 692.8 2164.3 691.5 2164.6 690.3C2165.0 689.0 2165.4 687.7 2165.7 686.4C2166.0 685.1 2166.4 683.9 2166.7 682.6C2167.1 681.3 2167.4 680.0 2167.7 678.7C2168.1 677.4 2168.4 676.1 2168.7 674.9C2169.0 673.6 2169.4 672.3 2169.7 671.0C2170.0 669.7 2170.3 668.4 2170.6 667.1C2171.0 665.8 2171.3 664.5 2171.6 663.2C2171.9 661.9 2172.2 660.6 2172.5 659.3C2172.8 658.0 2173.1 656.7 2173.4 655.4C2173.7 654.1 2174.0 652.8 2174.3 651.5C2174.6 650.2 2174.9 648.9 2175.2 647.6C2175.5 646.3 2175.8 645.0 2176.1 643.7C2176.4 642.4 2176.7 641.1 2177.0 639.8C2177.3 638.5 2177.6 637.2 2177.9 635.9C2178.2 634.6 2178.4 633.3 2178.7 632.0C2179.0 630.7 2179.3 629.4 2179.6 628.0C2179.9 626.7 2180.2 625.5 2180.5 624.1C2180.8 622.8 2181.1 621.5 2181.4 620.2C2181.7 618.9 2182.0 617.6 2182.3 616.3C2182.6 615.0 2182.9 613.7 2183.2 612.4C2183.5 611.1 2183.8 609.8 2184.1 608.5C2184.4 607.2 2184.7 605.9 2185.1 604.6C2185.4 603.4 2185.7 602.1 2186.0 600.8C2186.3 599.5 2186.6 598.2 2187.0 596.9C2187.3 595.6 2187.6 594.3 2187.9 593.0C2188.3 591.7 2188.6 590.4 2188.9 589.1C2189.3 587.8 2189.6 586.6 2189.9 585.3C2190.3 584.0 2190.6 582.7 2191.0 581.4C2191.3 580.1 2191.7 578.8 2192.0 577.6C2192.4 576.3 2192.7 575.0 2193.1 573.7C2193.5 572.4 2193.8 571.1 2194.2 569.9C2194.5 568.6 2194.9 567.3 2195.3 566.0C2195.7 564.8 2196.0 563.5 2196.4 562.2C2196.8 560.9 2197.2 559.6 2197.6 558.4C2197.9 557.1 2198.3 555.8 2198.7 554.5C2199.1 553.3 2199.5 552.0 2199.9 550.7C2200.3 549.4 2200.7 548.2 2201.1 546.9C2201.5 545.6 2201.9 544.4 2202.3 543.1C2202.7 541.8 2203.2 540.6 2203.6 539.3C2204.0 538.0 2204.4 536.8 2204.8 535.5C2205.3 534.2 2205.7 533.0 2206.2 531.7C2206.6 530.4 2207.0 529.2 2207.5 527.9C2207.9 526.7 2208.4 525.4 2208.9 524.2C2209.5 522.9 2210.0 521.7 2210.7 520.5C2211.3 519.3 2212.0 518.1 2212.8 517.0C2213.7 515.9 2214.6 514.6 2215.6 513.9C2216.5 513.2 2217.6 512.6 2218.6 512.7C2219.6 512.8 2220.7 513.6 2221.6 514.4C2222.6 515.3 2223.5 516.6 2224.2 517.7C2225.0 518.9 2225.7 520.1 2226.3 521.3C2226.9 522.5 2227.4 523.8 2227.8 525.0C2228.3 526.3 2228.7 527.5 2229.1 528.8C2229.5 530.1 2229.9 531.4 2230.2 532.7C2230.6 533.9 2231.0 535.2 2231.4 536.5C2231.8 537.8 2232.1 539.1 2232.5 540.4C2232.9 541.7 2233.2 542.9 2233.6 544.2C2234.0 545.5 2234.3 546.8 2234.7 548.1C2235.1 549.4 2235.4 550.7 2235.8 552.0C2236.1 553.2 2236.5 554.5 2236.8 555.8C2237.2 557.1 2237.5 558.4 2237.8 559.7C2238.2 561.0 2238.5 562.3 2238.8 563.6C2239.2 564.8 2239.5 566.1 2239.8 567.4C2240.1 568.7 2240.4 570.0 2240.7 571.3C2241.0 572.6 2241.4 573.8 2241.7 575.1C2241.9 576.4 2242.2 577.7 2242.5 579.0C2242.8 580.2 2243.1 581.5 2243.4 582.8C2243.7 584.1 2244.0 585.4 2244.4 586.7C2244.7 588.0 2245.1 589.3 2245.5 590.6C2245.9 591.9 2246.3 593.2 2246.8 594.6C2247.3 595.9 2247.9 597.3 2248.5 598.6C2249.1 600.0 2249.8 601.5 2250.4 602.4C2251.1 603.3 2251.9 604.0 2252.6 604.0C2253.3 604.0 2254.1 603.2 2254.8 602.3C2255.5 601.4 2256.2 599.9 2256.8 598.6C2257.5 597.3 2258.0 596.0 2258.6 594.7C2259.1 593.4 2259.6 592.1 2260.1 590.9C2260.5 589.6 2261.0 588.3 2261.4 587.1C2261.8 585.8 2262.2 584.6 2262.6 583.3C2263.0 582.1 2263.3 580.8 2263.7 579.6C2264.1 578.3 2264.5 577.0 2264.9 575.8C2265.3 574.5 2265.6 573.2 2266.0 572.0C2266.4 570.7 2266.8 569.4 2267.2 568.1C2267.6 566.9 2268.0 565.6 2268.3 564.3C2268.7 563.0 2269.1 561.8 2269.5 560.5C2269.9 559.2 2270.3 557.9 2270.7 556.6C2271.1 555.4 2271.5 554.1 2271.9 552.8C2272.2 551.5 2272.6 550.3 2273.0 549.0C2273.4 547.7 2273.8 546.4 2274.2 545.2C2274.6 543.9 2275.0 542.6 2275.4 541.4C2275.7 540.1 2276.1 538.9 2276.5 537.6C2276.9 536.4 2277.3 535.1 2277.7 533.8C2278.1 532.6 2278.5 531.3 2278.8 530.0C2279.2 528.7 2279.6 527.5 2280.0 526.2C2280.4 524.9 2280.8 523.6 2281.2 522.3C2281.6 521.0 2282.0 519.6 2282.5 518.4C2283.0 517.1 2283.5 515.8 2284.1 514.6C2284.7 513.4 2285.3 512.1 2286.1 511.1C2286.9 510.0 2287.8 508.7 2288.7 508.0C2289.7 507.3 2290.8 506.6 2291.8 506.6C2292.7 506.6 2293.8 507.2 2294.7 508.1C2295.6 508.9 2296.5 510.3 2297.2 511.5C2298.0 512.7 2298.6 514.1 2299.2 515.4C2299.8 516.6 2300.3 517.9 2300.8 519.1C2301.3 520.4 2301.7 521.6 2302.2 522.9C2302.6 524.1 2302.9 525.4 2303.3 526.6C2303.7 527.9 2304.1 529.2 2304.4 530.4C2304.8 531.7 2305.1 533.0 2305.5 534.2C2305.8 535.5 2306.1 536.8 2306.5 538.1C2306.8 539.4 2307.1 540.7 2307.4 542.0C2307.8 543.2 2308.1 544.5 2308.4 545.8C2308.7 547.1 2309.0 548.4 2309.3 549.7C2309.6 551.0 2309.9 552.4 2310.2 553.7C2310.5 555.0 2310.7 556.3 2311.0 557.6C2311.3 558.9 2311.6 560.2 2311.9 561.5C2312.2 562.8 2312.4 564.1 2312.7 565.4C2313.0 566.7 2313.3 568.0 2313.6 569.4C2313.9 570.7 2314.2 572.0 2314.4 573.3C2314.7 574.6 2315.0 575.9 2315.3 577.2C2315.6 578.5 2315.9 579.8 2316.2 581.1C2316.4 582.4 2316.7 583.7 2317.0 585.0C2317.3 586.3 2317.6 587.6 2317.9 588.9C2318.1 590.2 2318.4 591.5 2318.7 592.8C2319.0 594.1 2319.3 595.4 2319.6 596.7C2319.8 598.0 2320.1 599.3 2320.4 600.6C2320.7 601.9 2321.0 603.2 2321.2 604.5C2321.5 605.8 2321.8 607.1 2322.1 608.4C2322.4 609.7 2322.6 611.0 2322.9 612.3C2323.2 613.6 2323.5 614.9 2323.8 616.2C2324.1 617.5 2324.3 618.8 2324.6 620.1C2324.9 621.4 2325.2 622.7 2325.5 624.0C2325.8 625.3 2326.1 626.6 2326.4 627.9C2326.7 629.2 2327.1 630.5 2327.4 631.8C2327.7 633.1 2328.0 634.4 2328.4 635.7C2328.7 637.0 2329.1 638.3 2329.4 639.5C2329.8 640.8 2330.2 642.1 2330.6 643.4C2331.0 644.7 2331.4 645.9 2331.8 647.2C2332.2 648.5 2332.6 649.8 2333.0 651.0C2333.4 652.3 2333.8 653.6 2334.2 654.9C2334.6 656.1 2335.0 657.4 2335.4 658.7C2335.8 660.0 2336.2 661.2 2336.6 662.5C2336.9 663.8 2337.3 665.1 2337.6 666.4C2337.9 667.7 2338.3 668.9 2338.6 670.2C2338.8 671.5 2339.1 672.8 2339.4 674.1C2339.7 675.4 2339.9 676.7 2340.2 678.0C2340.4 679.3 2340.7 680.7 2340.9 682.0C2341.1 683.3 2341.4 684.6 2341.6 685.9C2341.8 687.2 2342.0 688.5 2342.3 689.8C2342.5 691.1 2342.7 692.5 2342.9 693.8C2343.2 695.1 2343.4 696.4 2343.6 697.7C2343.8 699.0 2344.1 700.3 2344.3 701.6C2344.5 703.0 2344.8 704.3 2345.0 705.6C2345.3 706.9 2345.5 708.2 2345.8 709.5C2346.0 710.8 2346.2 712.2 2346.5 713.5C2346.8 714.8 2347.0 716.1 2347.3 717.4C2347.5 718.7 2347.8 720.0 2348.0 721.3C2348.3 722.7 2348.5 724.0 2348.8 725.3C2349.1 726.6 2349.3 727.9 2349.6 729.2C2349.9 730.5 2350.1 731.8 2350.4 733.1C2350.7 734.5 2350.9 735.8 2351.2 737.1C2351.5 738.4 2351.7 739.7 2352.0 741.0C2352.2 742.3 2352.5 743.6 2352.8 744.9C2353.0 746.2 2353.3 747.6 2353.6 748.9C2353.8 750.2 2354.1 751.5 2354.4 752.8C2354.6 754.1 2354.9 755.4 2355.2 756.7C2355.4 758.0 2355.7 759.3 2355.9 760.6C2356.2 761.9 2356.4 763.2 2356.7 764.5C2356.9 765.8 2357.2 767.1 2357.4 768.4C2357.7 769.7 2357.9 771.0 2358.2 772.4C2358.4 773.7 2358.7 775.0 2358.9 776.3C2359.2 777.6 2359.4 778.9 2359.7 780.2C2359.9 781.5 2360.2 782.8 2360.4 784.1C2360.7 785.4 2361.0 786.7 2361.2 788.0C2361.5 789.3 2361.7 790.6 2362.0 791.9C2362.2 793.2 2362.5 794.5 2362.8 795.8C2363.0 797.1 2363.3 798.4 2363.6 799.7C2363.8 801.0 2364.1 802.3 2364.4 803.6C2364.7 804.9 2364.9 806.2 2365.2 807.5C2365.5 808.8 2365.8 810.1 2366.1 811.4C2366.4 812.7 2366.7 814.0 2367.0 815.3C2367.3 816.6 2367.6 817.9 2367.9 819.2C2368.2 820.6 2368.6 821.9 2368.9 823.2C2369.2 824.5 2369.5 825.8 2369.9 827.1C2370.2 828.4 2370.6 829.7 2370.9 831.0C2371.3 832.3 2371.6 833.6 2372.0 834.9C2372.4 836.2 2372.8 837.6 2373.2 838.9C2373.6 840.2 2373.9 841.5 2374.4 842.8C2374.9 844.0 2375.4 845.3 2376.2 846.2C2376.9 847.2 2378.0 848.2 2379.0 848.6C2380.0 848.9 2381.2 848.9 2382.1 848.4C2383.0 847.9 2383.8 846.7 2384.5 845.6C2385.2 844.5 2385.8 843.2 2386.4 842.0C2387.0 840.7 2387.5 839.4 2388.0 838.1C2388.6 836.9 2389.1 835.6 2389.6 834.3C2390.1 833.1 2390.7 831.8 2391.3 830.7C2391.9 829.5 2392.6 828.4 2393.3 827.3C2394.0 826.2 2394.8 825.1 2395.6 824.0C2396.5 823.0 2397.3 821.9 2398.3 821.0C2399.3 820.0 2400.3 818.9 2401.4 818.3C2402.5 817.6 2403.7 817.1 2404.8 817.0C2406.0 816.9 2407.3 817.3 2408.5 817.8C2409.7 818.4 2410.9 819.4 2411.8 820.4C2412.8 821.3 2413.6 822.5 2414.3 823.7C2415.0 824.9 2415.5 826.1 2416.0 827.3C2416.6 828.5 2417.1 829.7 2417.7 830.9C2418.2 832.1 2418.8 833.4 2419.3 834.6C2419.8 835.8 2420.4 837.0 2420.9 838.2C2421.4 839.5 2421.9 840.7 2422.4 841.9C2423.0 843.1 2423.5 844.4 2424.0 845.6C2424.5 846.8 2425.0 848.1 2425.5 849.3C2426.0 850.5 2426.4 851.8 2426.9 853.0C2427.4 854.3 2427.9 855.5 2428.3 856.8C2428.8 858.0 2429.3 859.3 2429.7 860.5C2430.2 861.8 2430.6 863.0 2431.1 864.3C2431.5 865.5 2432.0 866.8 2432.4 868.1C2432.8 869.3 2433.3 870.6 2433.7 871.9C2434.1 873.1 2434.5 874.4 2434.9 875.6C2435.3 876.9 2435.7 878.2 2436.1 879.5C2436.5 880.7 2436.9 882.0 2437.3 883.3C2437.7 884.6 2438.0 885.9 2438.4 887.1C2438.8 888.4 2439.1 889.7 2439.5 891.0C2439.8 892.3 2440.2 893.6 2440.5 894.9C2440.9 896.1 2441.2 897.4 2441.5 898.7C2441.8 900.0 2442.2 901.3 2442.5 902.6C2442.8 903.9 2443.1 905.2 2443.4 906.5C2443.8 907.8 2444.1 909.1 2444.4 910.4C2444.7 911.7 2445.0 913.0 2445.3 914.3C2445.7 915.6 2446.0 916.9 2446.3 918.2C2446.6 919.5 2447.0 920.7 2447.3 922.0C2447.6 923.3 2447.9 924.6 2448.3 925.9C2448.6 927.2 2449.0 928.5 2449.3 929.8C2449.7 931.1 2450.0 932.3 2450.4 933.6C2450.8 934.9 2451.2 936.2 2451.6 937.4C2452.0 938.7 2452.4 940.0 2452.8 941.2C2453.2 942.5 2453.6 943.8 2454.1 945.0C2454.5 946.3 2455.0 947.5 2455.4 948.8C2455.9 950.0 2456.4 951.3 2456.9 952.5C2457.4 953.7 2458.1 955.3 2458.5 956.2C2458.9 957.0 2459.0 957.3 2459.1 957.6"/>
</g>
<g fill="#e4e4e4">
<text x="83.6" y="24" text-anchor="end" textLength="38.2" lengthAdjust="spacingAndGlyphs">SPL</text>
<text x="83.6" y="1127.4" text-anchor="end">-25</text>
<text x="83.6" y="1029.5" text-anchor="end">-20</text>
<text x="83.6" y="931.7" text-anchor="end">-15</text>
<text x="83.6" y="833.9" text-anchor="end">-10</text>
<text x="83.6" y="736.0" text-anchor="end">-5</text>
<text x="83.6" y="638.2" text-anchor="end">0</text>
<text x="83.6" y="540.4" text-anchor="end">5</text>
<text x="83.6" y="442.5" text-anchor="end">10</text>
<text x="83.6" y="344.7" text-anchor="end">15</text>
<text x="83.6" y="246.9" text-anchor="end">20</text>
<text x="83.6" y="149.0" text-anchor="end">25</text>
</g>
<g fill="#cccccc" text-anchor="middle">
<text x="276.0" y="33" textLength="101.2" lengthAdjust="spacingAndGlyphs">Sub bass</text>
<text x="709.2" y="33" textLength="50.3" lengthAdjust="spacingAndGlyphs">Bass</text>
<text x="1073.0" y="33" textLength="96.8" lengthAdjust="spacingAndGlyphs">Low mid</text>
<text x="1429.7" y="33" textLength="44.1" lengthAdjust="spacingAndGlyphs">Mid</text>
<text x="1786.4" y="33" textLength="120.8" lengthAdjust="spacingAndGlyphs">Upper mid</text>
<text x="1974.9" y="33" textLength="104.6" lengthAdjust="spacingAndGlyphs">Presence</text>
<text x="2251.0" y="33">Brilliance</text>
</g>
<g fill="#e4e4e4" text-anchor="middle">
<text x="88.0" y="1250">20</text>
<text x="227.1" y="1250">30</text>
<text x="325.8" y="1250">40</text>
<text x="402.4" y="1250">50</text>
<text x="464.9" y="1250">60</text>
<text x="517.8" y="1250">70</text>
<text x="563.6" y="1250">80</text>
<text x="640.2" y="1250">100</text>
<text x="878.0" y="1250">200</text>
<text x="1017.1" y="1250">300</text>
<text x="1115.8" y="1250">400</text>
<text x="1192.4" y="1250">500</text>
<text x="1254.9" y="1250">600</text>
<text x="1353.6" y="1250">800</text>
<text x="1430.2" y="1250">1k</text>
<text x="1668.0" y="1250">2k</text>
<text x="1807.1" y="1250">3k</text>
<text x="1905.8" y="1250">4k</text>
<text x="1982.4" y="1250">5k</text>
<text x="2044.9" y="1250">6k</text>
<text x="2097.8" y="1250">7k</text>
<text x="2143.6" y="1250">8k</text>
<text x="2220.2" y="1250">10k</text>
<text x="2310.2" y="1250" fill="#707070">13k</text>
<text x="2381.4" y="1250" fill="#707070">16k</text>
<text x="2453.0" y="1250">20kHz</text>
</g>
<text x="597" y="1290" fill="#1c8c2c">VK Капсула Нео</text>
<text x="1332.5" y="1290" fill="#ee8c00" textLength="283.8" lengthAdjust="spacingAndGlyphs">Яндекс Станция Мини 3</text>
</svg>
</body></html>
